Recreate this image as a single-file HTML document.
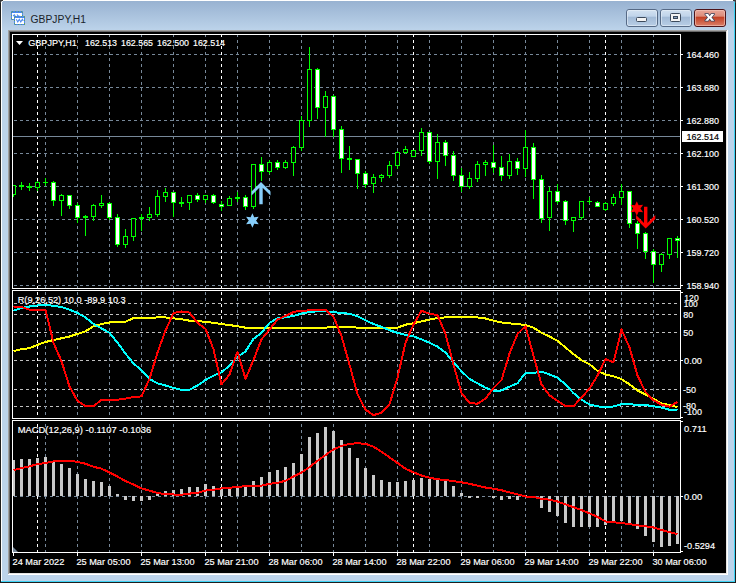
<!DOCTYPE html><html><head><meta charset="utf-8"><title>GBPJPY,H1</title><style>html,body{margin:0;padding:0;background:#fff;overflow:hidden}svg text{white-space:pre}</style></head><body><svg width="738" height="583" viewBox="0 0 738 583" style="display:block" font-family="'Liberation Sans', sans-serif">
<defs><linearGradient id="tb" x1="0" y1="0" x2="0" y2="1"><stop offset="0" stop-color="#98b2d1"/><stop offset="1" stop-color="#bcd3ea"/></linearGradient><linearGradient id="btn" x1="0" y1="0" x2="0" y2="1"><stop offset="0" stop-color="#d4e2f1"/><stop offset="0.4" stop-color="#c0d4ea"/><stop offset="0.44" stop-color="#a2bad6"/><stop offset="1" stop-color="#b9cfe7"/></linearGradient><linearGradient id="cls" x1="0" y1="0" x2="0" y2="1"><stop offset="0" stop-color="#eaa89b"/><stop offset="0.4" stop-color="#dc8c7a"/><stop offset="0.44" stop-color="#c23e22"/><stop offset="1" stop-color="#dc826c"/></linearGradient></defs>
<rect x="0" y="0" width="738" height="583" fill="#ffffff"/>
<rect x="0" y="0" width="736" height="583" fill="#1e1e1e"/>
<rect x="1" y="0" width="734" height="582" fill="#3dd3f5"/>
<rect x="1" y="0" width="733" height="581" fill="#ffffff"/>
<rect x="2" y="1" width="732" height="580" fill="#bcd3ea"/>
<rect x="2" y="1" width="732" height="29" fill="url(#tb)"/>
<rect x="0" y="0" width="3" height="1" fill="#3a3a3a"/>
<rect x="0" y="1" width="1" height="2" fill="#3a3a3a"/>
<rect x="1" y="1" width="1" height="1" fill="#9aa0a8"/>
<rect x="2" y="1" width="1" height="1" fill="#e8eef6"/>
<rect x="733" y="0" width="3" height="1" fill="#3a3a3a"/>
<rect x="735" y="1" width="1" height="2" fill="#3a3a3a"/>
<rect x="734" y="1" width="1" height="1" fill="#6a8aa0"/>
<g shape-rendering="crispEdges">
<rect x="11" y="11" width="12" height="9" fill="#4a88f0"/>
<rect x="12" y="13" width="10" height="6" fill="#ffffff"/>
<path d="M11.5 12V20M22.5 12V20M12 11.5H23M12 19.5H23" stroke="#5f9c6c" stroke-dasharray="1 2" stroke-width="1"/>
<rect x="14" y="16" width="11" height="9" fill="#4a88f0"/>
<rect x="15" y="18" width="9" height="6" fill="#ffffff"/>
<path d="M14.5 17V25M24.5 17V25M15 16.5H25M15 24.5H25" stroke="#5f9c6c" stroke-dasharray="1 2" stroke-width="1"/>
</g>
<path d="M13 16.2l1.3-1.3 1 1M17 14.5l1 1.2 1.5 0.6" stroke="#4a88f0" fill="none" stroke-width="1.1"/>
<path d="M16.3 19.3l1.5 2.6 1.5-2.6 1.5 2.6 1.5-2.6 1 1.6" stroke="#4a88f0" fill="none" stroke-width="1.1"/>
<text x="30.6" y="22.5" font-size="11.7" fill="#1a1f2a" textLength="55.4" lengthAdjust="spacingAndGlyphs">GBPJPY,H1</text>
<rect x="626.5" y="9.5" width="31" height="17" rx="2.5" fill="url(#btn)" stroke="#566a86"/>
<rect x="627.5" y="10.5" width="29" height="15" rx="1.5" fill="none" stroke="#e8f0f8" stroke-opacity="0.6"/>
<rect x="660.5" y="9.5" width="31" height="17" rx="2.5" fill="url(#btn)" stroke="#566a86"/>
<rect x="661.5" y="10.5" width="29" height="15" rx="1.5" fill="none" stroke="#e8f0f8" stroke-opacity="0.6"/>
<rect x="694.5" y="9.5" width="31" height="17" rx="2.5" fill="url(#cls)" stroke="#4d141a"/>
<rect x="695.5" y="10.5" width="29" height="15" rx="1.5" fill="none" stroke="#f5c8bd" stroke-opacity="0.6"/>
<rect x="636.5" y="17.5" width="10" height="4" rx="1" fill="#f4f4f4" stroke="#3c4a5c"/>
<rect x="670.5" y="13.5" width="10" height="8" rx="1" fill="#f4f4f4" stroke="#3c4a5c"/>
<rect x="673.5" y="16.5" width="4" height="2" fill="#8aa2c0" stroke="#3c4a5c"/>
<path d="M705.1 14H708.1L709.7 16.2L711.3 14H714.3L711.4 17.4L714.3 20.8H711.3L709.7 18.6L708.1 20.8H705.1L708 17.4Z" fill="#ffffff" stroke="#3a4560" stroke-width="1.4" stroke-linejoin="round" paint-order="stroke"/>
<rect x="8" y="30" width="720" height="545" fill="#ffffff"/>
<rect x="8" y="30" width="719" height="1" fill="#a0a0a0"/>
<rect x="8" y="30" width="1" height="544" fill="#a0a0a0"/>
<rect x="9" y="31" width="717" height="1" fill="#696969"/>
<rect x="9" y="31" width="1" height="542" fill="#696969"/>
<rect x="9" y="573" width="718" height="1" fill="#e3e3e3"/>
<rect x="726" y="31" width="1" height="543" fill="#e3e3e3"/>
<rect x="10" y="32" width="716" height="541" fill="#000000"/>
<g shape-rendering="crispEdges">
<path d="M14 54.5H17M20 54.5H23M26 54.5H29M32 54.5H35M38 54.5H41M44 54.5H47M50 54.5H53M56 54.5H59M62 54.5H65M68 54.5H71M74 54.5H77M80 54.5H83M86 54.5H89M92 54.5H95M98 54.5H101M104 54.5H107M110 54.5H113M116 54.5H119M122 54.5H125M128 54.5H131M134 54.5H137M140 54.5H143M146 54.5H149M152 54.5H155M158 54.5H161M164 54.5H167M170 54.5H173M176 54.5H179M182 54.5H185M188 54.5H191M194 54.5H197M200 54.5H203M206 54.5H209M212 54.5H215M218 54.5H221M224 54.5H227M230 54.5H233M236 54.5H239M242 54.5H245M248 54.5H251M254 54.5H257M260 54.5H263M266 54.5H269M272 54.5H275M278 54.5H281M284 54.5H287M290 54.5H293M296 54.5H299M302 54.5H305M308 54.5H311M314 54.5H317M320 54.5H323M326 54.5H329M332 54.5H335M338 54.5H341M344 54.5H347M350 54.5H353M356 54.5H359M362 54.5H365M368 54.5H371M374 54.5H377M380 54.5H383M386 54.5H389M392 54.5H395M398 54.5H401M404 54.5H407M410 54.5H413M416 54.5H419M422 54.5H425M428 54.5H431M434 54.5H437M440 54.5H443M446 54.5H449M452 54.5H455M458 54.5H461M464 54.5H467M470 54.5H473M476 54.5H479M482 54.5H485M488 54.5H491M494 54.5H497M500 54.5H503M506 54.5H509M512 54.5H515M518 54.5H521M524 54.5H527M530 54.5H533M536 54.5H539M542 54.5H545M548 54.5H551M554 54.5H557M560 54.5H563M566 54.5H569M572 54.5H575M578 54.5H581M584 54.5H587M590 54.5H593M596 54.5H599M602 54.5H605M608 54.5H611M614 54.5H617M620 54.5H623M626 54.5H629M632 54.5H635M638 54.5H641M644 54.5H647M650 54.5H653M656 54.5H659M662 54.5H665M668 54.5H671M674 54.5H677" stroke="#778899" stroke-width="1"/>
<path d="M14 87.5H17M20 87.5H23M26 87.5H29M32 87.5H35M38 87.5H41M44 87.5H47M50 87.5H53M56 87.5H59M62 87.5H65M68 87.5H71M74 87.5H77M80 87.5H83M86 87.5H89M92 87.5H95M98 87.5H101M104 87.5H107M110 87.5H113M116 87.5H119M122 87.5H125M128 87.5H131M134 87.5H137M140 87.5H143M146 87.5H149M152 87.5H155M158 87.5H161M164 87.5H167M170 87.5H173M176 87.5H179M182 87.5H185M188 87.5H191M194 87.5H197M200 87.5H203M206 87.5H209M212 87.5H215M218 87.5H221M224 87.5H227M230 87.5H233M236 87.5H239M242 87.5H245M248 87.5H251M254 87.5H257M260 87.5H263M266 87.5H269M272 87.5H275M278 87.5H281M284 87.5H287M290 87.5H293M296 87.5H299M302 87.5H305M308 87.5H311M314 87.5H317M320 87.5H323M326 87.5H329M332 87.5H335M338 87.5H341M344 87.5H347M350 87.5H353M356 87.5H359M362 87.5H365M368 87.5H371M374 87.5H377M380 87.5H383M386 87.5H389M392 87.5H395M398 87.5H401M404 87.5H407M410 87.5H413M416 87.5H419M422 87.5H425M428 87.5H431M434 87.5H437M440 87.5H443M446 87.5H449M452 87.5H455M458 87.5H461M464 87.5H467M470 87.5H473M476 87.5H479M482 87.5H485M488 87.5H491M494 87.5H497M500 87.5H503M506 87.5H509M512 87.5H515M518 87.5H521M524 87.5H527M530 87.5H533M536 87.5H539M542 87.5H545M548 87.5H551M554 87.5H557M560 87.5H563M566 87.5H569M572 87.5H575M578 87.5H581M584 87.5H587M590 87.5H593M596 87.5H599M602 87.5H605M608 87.5H611M614 87.5H617M620 87.5H623M626 87.5H629M632 87.5H635M638 87.5H641M644 87.5H647M650 87.5H653M656 87.5H659M662 87.5H665M668 87.5H671M674 87.5H677" stroke="#778899" stroke-width="1"/>
<path d="M14 120.5H17M20 120.5H23M26 120.5H29M32 120.5H35M38 120.5H41M44 120.5H47M50 120.5H53M56 120.5H59M62 120.5H65M68 120.5H71M74 120.5H77M80 120.5H83M86 120.5H89M92 120.5H95M98 120.5H101M104 120.5H107M110 120.5H113M116 120.5H119M122 120.5H125M128 120.5H131M134 120.5H137M140 120.5H143M146 120.5H149M152 120.5H155M158 120.5H161M164 120.5H167M170 120.5H173M176 120.5H179M182 120.5H185M188 120.5H191M194 120.5H197M200 120.5H203M206 120.5H209M212 120.5H215M218 120.5H221M224 120.5H227M230 120.5H233M236 120.5H239M242 120.5H245M248 120.5H251M254 120.5H257M260 120.5H263M266 120.5H269M272 120.5H275M278 120.5H281M284 120.5H287M290 120.5H293M296 120.5H299M302 120.5H305M308 120.5H311M314 120.5H317M320 120.5H323M326 120.5H329M332 120.5H335M338 120.5H341M344 120.5H347M350 120.5H353M356 120.5H359M362 120.5H365M368 120.5H371M374 120.5H377M380 120.5H383M386 120.5H389M392 120.5H395M398 120.5H401M404 120.5H407M410 120.5H413M416 120.5H419M422 120.5H425M428 120.5H431M434 120.5H437M440 120.5H443M446 120.5H449M452 120.5H455M458 120.5H461M464 120.5H467M470 120.5H473M476 120.5H479M482 120.5H485M488 120.5H491M494 120.5H497M500 120.5H503M506 120.5H509M512 120.5H515M518 120.5H521M524 120.5H527M530 120.5H533M536 120.5H539M542 120.5H545M548 120.5H551M554 120.5H557M560 120.5H563M566 120.5H569M572 120.5H575M578 120.5H581M584 120.5H587M590 120.5H593M596 120.5H599M602 120.5H605M608 120.5H611M614 120.5H617M620 120.5H623M626 120.5H629M632 120.5H635M638 120.5H641M644 120.5H647M650 120.5H653M656 120.5H659M662 120.5H665M668 120.5H671M674 120.5H677" stroke="#778899" stroke-width="1"/>
<path d="M14 153.5H17M20 153.5H23M26 153.5H29M32 153.5H35M38 153.5H41M44 153.5H47M50 153.5H53M56 153.5H59M62 153.5H65M68 153.5H71M74 153.5H77M80 153.5H83M86 153.5H89M92 153.5H95M98 153.5H101M104 153.5H107M110 153.5H113M116 153.5H119M122 153.5H125M128 153.5H131M134 153.5H137M140 153.5H143M146 153.5H149M152 153.5H155M158 153.5H161M164 153.5H167M170 153.5H173M176 153.5H179M182 153.5H185M188 153.5H191M194 153.5H197M200 153.5H203M206 153.5H209M212 153.5H215M218 153.5H221M224 153.5H227M230 153.5H233M236 153.5H239M242 153.5H245M248 153.5H251M254 153.5H257M260 153.5H263M266 153.5H269M272 153.5H275M278 153.5H281M284 153.5H287M290 153.5H293M296 153.5H299M302 153.5H305M308 153.5H311M314 153.5H317M320 153.5H323M326 153.5H329M332 153.5H335M338 153.5H341M344 153.5H347M350 153.5H353M356 153.5H359M362 153.5H365M368 153.5H371M374 153.5H377M380 153.5H383M386 153.5H389M392 153.5H395M398 153.5H401M404 153.5H407M410 153.5H413M416 153.5H419M422 153.5H425M428 153.5H431M434 153.5H437M440 153.5H443M446 153.5H449M452 153.5H455M458 153.5H461M464 153.5H467M470 153.5H473M476 153.5H479M482 153.5H485M488 153.5H491M494 153.5H497M500 153.5H503M506 153.5H509M512 153.5H515M518 153.5H521M524 153.5H527M530 153.5H533M536 153.5H539M542 153.5H545M548 153.5H551M554 153.5H557M560 153.5H563M566 153.5H569M572 153.5H575M578 153.5H581M584 153.5H587M590 153.5H593M596 153.5H599M602 153.5H605M608 153.5H611M614 153.5H617M620 153.5H623M626 153.5H629M632 153.5H635M638 153.5H641M644 153.5H647M650 153.5H653M656 153.5H659M662 153.5H665M668 153.5H671M674 153.5H677" stroke="#778899" stroke-width="1"/>
<path d="M14 186.5H17M20 186.5H23M26 186.5H29M32 186.5H35M38 186.5H41M44 186.5H47M50 186.5H53M56 186.5H59M62 186.5H65M68 186.5H71M74 186.5H77M80 186.5H83M86 186.5H89M92 186.5H95M98 186.5H101M104 186.5H107M110 186.5H113M116 186.5H119M122 186.5H125M128 186.5H131M134 186.5H137M140 186.5H143M146 186.5H149M152 186.5H155M158 186.5H161M164 186.5H167M170 186.5H173M176 186.5H179M182 186.5H185M188 186.5H191M194 186.5H197M200 186.5H203M206 186.5H209M212 186.5H215M218 186.5H221M224 186.5H227M230 186.5H233M236 186.5H239M242 186.5H245M248 186.5H251M254 186.5H257M260 186.5H263M266 186.5H269M272 186.5H275M278 186.5H281M284 186.5H287M290 186.5H293M296 186.5H299M302 186.5H305M308 186.5H311M314 186.5H317M320 186.5H323M326 186.5H329M332 186.5H335M338 186.5H341M344 186.5H347M350 186.5H353M356 186.5H359M362 186.5H365M368 186.5H371M374 186.5H377M380 186.5H383M386 186.5H389M392 186.5H395M398 186.5H401M404 186.5H407M410 186.5H413M416 186.5H419M422 186.5H425M428 186.5H431M434 186.5H437M440 186.5H443M446 186.5H449M452 186.5H455M458 186.5H461M464 186.5H467M470 186.5H473M476 186.5H479M482 186.5H485M488 186.5H491M494 186.5H497M500 186.5H503M506 186.5H509M512 186.5H515M518 186.5H521M524 186.5H527M530 186.5H533M536 186.5H539M542 186.5H545M548 186.5H551M554 186.5H557M560 186.5H563M566 186.5H569M572 186.5H575M578 186.5H581M584 186.5H587M590 186.5H593M596 186.5H599M602 186.5H605M608 186.5H611M614 186.5H617M620 186.5H623M626 186.5H629M632 186.5H635M638 186.5H641M644 186.5H647M650 186.5H653M656 186.5H659M662 186.5H665M668 186.5H671M674 186.5H677" stroke="#778899" stroke-width="1"/>
<path d="M14 219.5H17M20 219.5H23M26 219.5H29M32 219.5H35M38 219.5H41M44 219.5H47M50 219.5H53M56 219.5H59M62 219.5H65M68 219.5H71M74 219.5H77M80 219.5H83M86 219.5H89M92 219.5H95M98 219.5H101M104 219.5H107M110 219.5H113M116 219.5H119M122 219.5H125M128 219.5H131M134 219.5H137M140 219.5H143M146 219.5H149M152 219.5H155M158 219.5H161M164 219.5H167M170 219.5H173M176 219.5H179M182 219.5H185M188 219.5H191M194 219.5H197M200 219.5H203M206 219.5H209M212 219.5H215M218 219.5H221M224 219.5H227M230 219.5H233M236 219.5H239M242 219.5H245M248 219.5H251M254 219.5H257M260 219.5H263M266 219.5H269M272 219.5H275M278 219.5H281M284 219.5H287M290 219.5H293M296 219.5H299M302 219.5H305M308 219.5H311M314 219.5H317M320 219.5H323M326 219.5H329M332 219.5H335M338 219.5H341M344 219.5H347M350 219.5H353M356 219.5H359M362 219.5H365M368 219.5H371M374 219.5H377M380 219.5H383M386 219.5H389M392 219.5H395M398 219.5H401M404 219.5H407M410 219.5H413M416 219.5H419M422 219.5H425M428 219.5H431M434 219.5H437M440 219.5H443M446 219.5H449M452 219.5H455M458 219.5H461M464 219.5H467M470 219.5H473M476 219.5H479M482 219.5H485M488 219.5H491M494 219.5H497M500 219.5H503M506 219.5H509M512 219.5H515M518 219.5H521M524 219.5H527M530 219.5H533M536 219.5H539M542 219.5H545M548 219.5H551M554 219.5H557M560 219.5H563M566 219.5H569M572 219.5H575M578 219.5H581M584 219.5H587M590 219.5H593M596 219.5H599M602 219.5H605M608 219.5H611M614 219.5H617M620 219.5H623M626 219.5H629M632 219.5H635M638 219.5H641M644 219.5H647M650 219.5H653M656 219.5H659M662 219.5H665M668 219.5H671M674 219.5H677" stroke="#778899" stroke-width="1"/>
<path d="M14 252.5H17M20 252.5H23M26 252.5H29M32 252.5H35M38 252.5H41M44 252.5H47M50 252.5H53M56 252.5H59M62 252.5H65M68 252.5H71M74 252.5H77M80 252.5H83M86 252.5H89M92 252.5H95M98 252.5H101M104 252.5H107M110 252.5H113M116 252.5H119M122 252.5H125M128 252.5H131M134 252.5H137M140 252.5H143M146 252.5H149M152 252.5H155M158 252.5H161M164 252.5H167M170 252.5H173M176 252.5H179M182 252.5H185M188 252.5H191M194 252.5H197M200 252.5H203M206 252.5H209M212 252.5H215M218 252.5H221M224 252.5H227M230 252.5H233M236 252.5H239M242 252.5H245M248 252.5H251M254 252.5H257M260 252.5H263M266 252.5H269M272 252.5H275M278 252.5H281M284 252.5H287M290 252.5H293M296 252.5H299M302 252.5H305M308 252.5H311M314 252.5H317M320 252.5H323M326 252.5H329M332 252.5H335M338 252.5H341M344 252.5H347M350 252.5H353M356 252.5H359M362 252.5H365M368 252.5H371M374 252.5H377M380 252.5H383M386 252.5H389M392 252.5H395M398 252.5H401M404 252.5H407M410 252.5H413M416 252.5H419M422 252.5H425M428 252.5H431M434 252.5H437M440 252.5H443M446 252.5H449M452 252.5H455M458 252.5H461M464 252.5H467M470 252.5H473M476 252.5H479M482 252.5H485M488 252.5H491M494 252.5H497M500 252.5H503M506 252.5H509M512 252.5H515M518 252.5H521M524 252.5H527M530 252.5H533M536 252.5H539M542 252.5H545M548 252.5H551M554 252.5H557M560 252.5H563M566 252.5H569M572 252.5H575M578 252.5H581M584 252.5H587M590 252.5H593M596 252.5H599M602 252.5H605M608 252.5H611M614 252.5H617M620 252.5H623M626 252.5H629M632 252.5H635M638 252.5H641M644 252.5H647M650 252.5H653M656 252.5H659M662 252.5H665M668 252.5H671M674 252.5H677" stroke="#778899" stroke-width="1"/>
<path d="M14 285.5H17M20 285.5H23M26 285.5H29M32 285.5H35M38 285.5H41M44 285.5H47M50 285.5H53M56 285.5H59M62 285.5H65M68 285.5H71M74 285.5H77M80 285.5H83M86 285.5H89M92 285.5H95M98 285.5H101M104 285.5H107M110 285.5H113M116 285.5H119M122 285.5H125M128 285.5H131M134 285.5H137M140 285.5H143M146 285.5H149M152 285.5H155M158 285.5H161M164 285.5H167M170 285.5H173M176 285.5H179M182 285.5H185M188 285.5H191M194 285.5H197M200 285.5H203M206 285.5H209M212 285.5H215M218 285.5H221M224 285.5H227M230 285.5H233M236 285.5H239M242 285.5H245M248 285.5H251M254 285.5H257M260 285.5H263M266 285.5H269M272 285.5H275M278 285.5H281M284 285.5H287M290 285.5H293M296 285.5H299M302 285.5H305M308 285.5H311M314 285.5H317M320 285.5H323M326 285.5H329M332 285.5H335M338 285.5H341M344 285.5H347M350 285.5H353M356 285.5H359M362 285.5H365M368 285.5H371M374 285.5H377M380 285.5H383M386 285.5H389M392 285.5H395M398 285.5H401M404 285.5H407M410 285.5H413M416 285.5H419M422 285.5H425M428 285.5H431M434 285.5H437M440 285.5H443M446 285.5H449M452 285.5H455M458 285.5H461M464 285.5H467M470 285.5H473M476 285.5H479M482 285.5H485M488 285.5H491M494 285.5H497M500 285.5H503M506 285.5H509M512 285.5H515M518 285.5H521M524 285.5H527M530 285.5H533M536 285.5H539M542 285.5H545M548 285.5H551M554 285.5H557M560 285.5H563M566 285.5H569M572 285.5H575M578 285.5H581M584 285.5H587M590 285.5H593M596 285.5H599M602 285.5H605M608 285.5H611M614 285.5H617M620 285.5H623M626 285.5H629M632 285.5H635M638 285.5H641M644 285.5H647M650 285.5H653M656 285.5H659M662 285.5H665M668 285.5H671M674 285.5H677" stroke="#778899" stroke-width="1"/>
<path d="M14 303.5H17M20 303.5H23M26 303.5H29M32 303.5H35M38 303.5H41M44 303.5H47M50 303.5H53M56 303.5H59M62 303.5H65M68 303.5H71M74 303.5H77M80 303.5H83M86 303.5H89M92 303.5H95M98 303.5H101M104 303.5H107M110 303.5H113M116 303.5H119M122 303.5H125M128 303.5H131M134 303.5H137M140 303.5H143M146 303.5H149M152 303.5H155M158 303.5H161M164 303.5H167M170 303.5H173M176 303.5H179M182 303.5H185M188 303.5H191M194 303.5H197M200 303.5H203M206 303.5H209M212 303.5H215M218 303.5H221M224 303.5H227M230 303.5H233M236 303.5H239M242 303.5H245M248 303.5H251M254 303.5H257M260 303.5H263M266 303.5H269M272 303.5H275M278 303.5H281M284 303.5H287M290 303.5H293M296 303.5H299M302 303.5H305M308 303.5H311M314 303.5H317M320 303.5H323M326 303.5H329M332 303.5H335M338 303.5H341M344 303.5H347M350 303.5H353M356 303.5H359M362 303.5H365M368 303.5H371M374 303.5H377M380 303.5H383M386 303.5H389M392 303.5H395M398 303.5H401M404 303.5H407M410 303.5H413M416 303.5H419M422 303.5H425M428 303.5H431M434 303.5H437M440 303.5H443M446 303.5H449M452 303.5H455M458 303.5H461M464 303.5H467M470 303.5H473M476 303.5H479M482 303.5H485M488 303.5H491M494 303.5H497M500 303.5H503M506 303.5H509M512 303.5H515M518 303.5H521M524 303.5H527M530 303.5H533M536 303.5H539M542 303.5H545M548 303.5H551M554 303.5H557M560 303.5H563M566 303.5H569M572 303.5H575M578 303.5H581M584 303.5H587M590 303.5H593M596 303.5H599M602 303.5H605M608 303.5H611M614 303.5H617M620 303.5H623M626 303.5H629M632 303.5H635M638 303.5H641M644 303.5H647M650 303.5H653M656 303.5H659M662 303.5H665M668 303.5H671M674 303.5H677" stroke="#c0c0c0" stroke-width="1"/>
<path d="M14 314.5H17M20 314.5H23M26 314.5H29M32 314.5H35M38 314.5H41M44 314.5H47M50 314.5H53M56 314.5H59M62 314.5H65M68 314.5H71M74 314.5H77M80 314.5H83M86 314.5H89M92 314.5H95M98 314.5H101M104 314.5H107M110 314.5H113M116 314.5H119M122 314.5H125M128 314.5H131M134 314.5H137M140 314.5H143M146 314.5H149M152 314.5H155M158 314.5H161M164 314.5H167M170 314.5H173M176 314.5H179M182 314.5H185M188 314.5H191M194 314.5H197M200 314.5H203M206 314.5H209M212 314.5H215M218 314.5H221M224 314.5H227M230 314.5H233M236 314.5H239M242 314.5H245M248 314.5H251M254 314.5H257M260 314.5H263M266 314.5H269M272 314.5H275M278 314.5H281M284 314.5H287M290 314.5H293M296 314.5H299M302 314.5H305M308 314.5H311M314 314.5H317M320 314.5H323M326 314.5H329M332 314.5H335M338 314.5H341M344 314.5H347M350 314.5H353M356 314.5H359M362 314.5H365M368 314.5H371M374 314.5H377M380 314.5H383M386 314.5H389M392 314.5H395M398 314.5H401M404 314.5H407M410 314.5H413M416 314.5H419M422 314.5H425M428 314.5H431M434 314.5H437M440 314.5H443M446 314.5H449M452 314.5H455M458 314.5H461M464 314.5H467M470 314.5H473M476 314.5H479M482 314.5H485M488 314.5H491M494 314.5H497M500 314.5H503M506 314.5H509M512 314.5H515M518 314.5H521M524 314.5H527M530 314.5H533M536 314.5H539M542 314.5H545M548 314.5H551M554 314.5H557M560 314.5H563M566 314.5H569M572 314.5H575M578 314.5H581M584 314.5H587M590 314.5H593M596 314.5H599M602 314.5H605M608 314.5H611M614 314.5H617M620 314.5H623M626 314.5H629M632 314.5H635M638 314.5H641M644 314.5H647M650 314.5H653M656 314.5H659M662 314.5H665M668 314.5H671M674 314.5H677" stroke="#c0c0c0" stroke-width="1"/>
<path d="M14 332.5H17M20 332.5H23M26 332.5H29M32 332.5H35M38 332.5H41M44 332.5H47M50 332.5H53M56 332.5H59M62 332.5H65M68 332.5H71M74 332.5H77M80 332.5H83M86 332.5H89M92 332.5H95M98 332.5H101M104 332.5H107M110 332.5H113M116 332.5H119M122 332.5H125M128 332.5H131M134 332.5H137M140 332.5H143M146 332.5H149M152 332.5H155M158 332.5H161M164 332.5H167M170 332.5H173M176 332.5H179M182 332.5H185M188 332.5H191M194 332.5H197M200 332.5H203M206 332.5H209M212 332.5H215M218 332.5H221M224 332.5H227M230 332.5H233M236 332.5H239M242 332.5H245M248 332.5H251M254 332.5H257M260 332.5H263M266 332.5H269M272 332.5H275M278 332.5H281M284 332.5H287M290 332.5H293M296 332.5H299M302 332.5H305M308 332.5H311M314 332.5H317M320 332.5H323M326 332.5H329M332 332.5H335M338 332.5H341M344 332.5H347M350 332.5H353M356 332.5H359M362 332.5H365M368 332.5H371M374 332.5H377M380 332.5H383M386 332.5H389M392 332.5H395M398 332.5H401M404 332.5H407M410 332.5H413M416 332.5H419M422 332.5H425M428 332.5H431M434 332.5H437M440 332.5H443M446 332.5H449M452 332.5H455M458 332.5H461M464 332.5H467M470 332.5H473M476 332.5H479M482 332.5H485M488 332.5H491M494 332.5H497M500 332.5H503M506 332.5H509M512 332.5H515M518 332.5H521M524 332.5H527M530 332.5H533M536 332.5H539M542 332.5H545M548 332.5H551M554 332.5H557M560 332.5H563M566 332.5H569M572 332.5H575M578 332.5H581M584 332.5H587M590 332.5H593M596 332.5H599M602 332.5H605M608 332.5H611M614 332.5H617M620 332.5H623M626 332.5H629M632 332.5H635M638 332.5H641M644 332.5H647M650 332.5H653M656 332.5H659M662 332.5H665M668 332.5H671M674 332.5H677" stroke="#c0c0c0" stroke-width="1"/>
<path d="M14 360.5H17M20 360.5H23M26 360.5H29M32 360.5H35M38 360.5H41M44 360.5H47M50 360.5H53M56 360.5H59M62 360.5H65M68 360.5H71M74 360.5H77M80 360.5H83M86 360.5H89M92 360.5H95M98 360.5H101M104 360.5H107M110 360.5H113M116 360.5H119M122 360.5H125M128 360.5H131M134 360.5H137M140 360.5H143M146 360.5H149M152 360.5H155M158 360.5H161M164 360.5H167M170 360.5H173M176 360.5H179M182 360.5H185M188 360.5H191M194 360.5H197M200 360.5H203M206 360.5H209M212 360.5H215M218 360.5H221M224 360.5H227M230 360.5H233M236 360.5H239M242 360.5H245M248 360.5H251M254 360.5H257M260 360.5H263M266 360.5H269M272 360.5H275M278 360.5H281M284 360.5H287M290 360.5H293M296 360.5H299M302 360.5H305M308 360.5H311M314 360.5H317M320 360.5H323M326 360.5H329M332 360.5H335M338 360.5H341M344 360.5H347M350 360.5H353M356 360.5H359M362 360.5H365M368 360.5H371M374 360.5H377M380 360.5H383M386 360.5H389M392 360.5H395M398 360.5H401M404 360.5H407M410 360.5H413M416 360.5H419M422 360.5H425M428 360.5H431M434 360.5H437M440 360.5H443M446 360.5H449M452 360.5H455M458 360.5H461M464 360.5H467M470 360.5H473M476 360.5H479M482 360.5H485M488 360.5H491M494 360.5H497M500 360.5H503M506 360.5H509M512 360.5H515M518 360.5H521M524 360.5H527M530 360.5H533M536 360.5H539M542 360.5H545M548 360.5H551M554 360.5H557M560 360.5H563M566 360.5H569M572 360.5H575M578 360.5H581M584 360.5H587M590 360.5H593M596 360.5H599M602 360.5H605M608 360.5H611M614 360.5H617M620 360.5H623M626 360.5H629M632 360.5H635M638 360.5H641M644 360.5H647M650 360.5H653M656 360.5H659M662 360.5H665M668 360.5H671M674 360.5H677" stroke="#c0c0c0" stroke-width="1"/>
<path d="M14 389.5H17M20 389.5H23M26 389.5H29M32 389.5H35M38 389.5H41M44 389.5H47M50 389.5H53M56 389.5H59M62 389.5H65M68 389.5H71M74 389.5H77M80 389.5H83M86 389.5H89M92 389.5H95M98 389.5H101M104 389.5H107M110 389.5H113M116 389.5H119M122 389.5H125M128 389.5H131M134 389.5H137M140 389.5H143M146 389.5H149M152 389.5H155M158 389.5H161M164 389.5H167M170 389.5H173M176 389.5H179M182 389.5H185M188 389.5H191M194 389.5H197M200 389.5H203M206 389.5H209M212 389.5H215M218 389.5H221M224 389.5H227M230 389.5H233M236 389.5H239M242 389.5H245M248 389.5H251M254 389.5H257M260 389.5H263M266 389.5H269M272 389.5H275M278 389.5H281M284 389.5H287M290 389.5H293M296 389.5H299M302 389.5H305M308 389.5H311M314 389.5H317M320 389.5H323M326 389.5H329M332 389.5H335M338 389.5H341M344 389.5H347M350 389.5H353M356 389.5H359M362 389.5H365M368 389.5H371M374 389.5H377M380 389.5H383M386 389.5H389M392 389.5H395M398 389.5H401M404 389.5H407M410 389.5H413M416 389.5H419M422 389.5H425M428 389.5H431M434 389.5H437M440 389.5H443M446 389.5H449M452 389.5H455M458 389.5H461M464 389.5H467M470 389.5H473M476 389.5H479M482 389.5H485M488 389.5H491M494 389.5H497M500 389.5H503M506 389.5H509M512 389.5H515M518 389.5H521M524 389.5H527M530 389.5H533M536 389.5H539M542 389.5H545M548 389.5H551M554 389.5H557M560 389.5H563M566 389.5H569M572 389.5H575M578 389.5H581M584 389.5H587M590 389.5H593M596 389.5H599M602 389.5H605M608 389.5H611M614 389.5H617M620 389.5H623M626 389.5H629M632 389.5H635M638 389.5H641M644 389.5H647M650 389.5H653M656 389.5H659M662 389.5H665M668 389.5H671M674 389.5H677" stroke="#c0c0c0" stroke-width="1"/>
<path d="M14 406.5H17M20 406.5H23M26 406.5H29M32 406.5H35M38 406.5H41M44 406.5H47M50 406.5H53M56 406.5H59M62 406.5H65M68 406.5H71M74 406.5H77M80 406.5H83M86 406.5H89M92 406.5H95M98 406.5H101M104 406.5H107M110 406.5H113M116 406.5H119M122 406.5H125M128 406.5H131M134 406.5H137M140 406.5H143M146 406.5H149M152 406.5H155M158 406.5H161M164 406.5H167M170 406.5H173M176 406.5H179M182 406.5H185M188 406.5H191M194 406.5H197M200 406.5H203M206 406.5H209M212 406.5H215M218 406.5H221M224 406.5H227M230 406.5H233M236 406.5H239M242 406.5H245M248 406.5H251M254 406.5H257M260 406.5H263M266 406.5H269M272 406.5H275M278 406.5H281M284 406.5H287M290 406.5H293M296 406.5H299M302 406.5H305M308 406.5H311M314 406.5H317M320 406.5H323M326 406.5H329M332 406.5H335M338 406.5H341M344 406.5H347M350 406.5H353M356 406.5H359M362 406.5H365M368 406.5H371M374 406.5H377M380 406.5H383M386 406.5H389M392 406.5H395M398 406.5H401M404 406.5H407M410 406.5H413M416 406.5H419M422 406.5H425M428 406.5H431M434 406.5H437M440 406.5H443M446 406.5H449M452 406.5H455M458 406.5H461M464 406.5H467M470 406.5H473M476 406.5H479M482 406.5H485M488 406.5H491M494 406.5H497M500 406.5H503M506 406.5H509M512 406.5H515M518 406.5H521M524 406.5H527M530 406.5H533M536 406.5H539M542 406.5H545M548 406.5H551M554 406.5H557M560 406.5H563M566 406.5H569M572 406.5H575M578 406.5H581M584 406.5H587M590 406.5H593M596 406.5H599M602 406.5H605M608 406.5H611M614 406.5H617M620 406.5H623M626 406.5H629M632 406.5H635M638 406.5H641M644 406.5H647M650 406.5H653M656 406.5H659M662 406.5H665M668 406.5H671M674 406.5H677" stroke="#c0c0c0" stroke-width="1"/>
<path d="M14 496.5H17M20 496.5H23M26 496.5H29M32 496.5H35M38 496.5H41M44 496.5H47M50 496.5H53M56 496.5H59M62 496.5H65M68 496.5H71M74 496.5H77M80 496.5H83M86 496.5H89M92 496.5H95M98 496.5H101M104 496.5H107M110 496.5H113M116 496.5H119M122 496.5H125M128 496.5H131M134 496.5H137M140 496.5H143M146 496.5H149M152 496.5H155M158 496.5H161M164 496.5H167M170 496.5H173M176 496.5H179M182 496.5H185M188 496.5H191M194 496.5H197M200 496.5H203M206 496.5H209M212 496.5H215M218 496.5H221M224 496.5H227M230 496.5H233M236 496.5H239M242 496.5H245M248 496.5H251M254 496.5H257M260 496.5H263M266 496.5H269M272 496.5H275M278 496.5H281M284 496.5H287M290 496.5H293M296 496.5H299M302 496.5H305M308 496.5H311M314 496.5H317M320 496.5H323M326 496.5H329M332 496.5H335M338 496.5H341M344 496.5H347M350 496.5H353M356 496.5H359M362 496.5H365M368 496.5H371M374 496.5H377M380 496.5H383M386 496.5H389M392 496.5H395M398 496.5H401M404 496.5H407M410 496.5H413M416 496.5H419M422 496.5H425M428 496.5H431M434 496.5H437M440 496.5H443M446 496.5H449M452 496.5H455M458 496.5H461M464 496.5H467M470 496.5H473M476 496.5H479M482 496.5H485M488 496.5H491M494 496.5H497M500 496.5H503M506 496.5H509M512 496.5H515M518 496.5H521M524 496.5H527M530 496.5H533M536 496.5H539M542 496.5H545M548 496.5H551M554 496.5H557M560 496.5H563M566 496.5H569M572 496.5H575M578 496.5H581M584 496.5H587M590 496.5H593M596 496.5H599M602 496.5H605M608 496.5H611M614 496.5H617M620 496.5H623M626 496.5H629M632 496.5H635M638 496.5H641M644 496.5H647M650 496.5H653M656 496.5H659M662 496.5H665M668 496.5H671M674 496.5H677" stroke="#778899" stroke-width="1"/>
<path d="M45.5 35V37M45.5 40V43M45.5 46V49M45.5 52V55M45.5 58V61M45.5 64V67M45.5 70V73M45.5 76V79M45.5 82V85M45.5 88V91M45.5 94V97M45.5 100V103M45.5 106V109M45.5 112V115M45.5 118V121M45.5 124V127M45.5 130V133M45.5 136V139M45.5 142V145M45.5 148V151M45.5 154V157M45.5 160V163M45.5 166V169M45.5 172V175M45.5 178V181M45.5 184V187M45.5 190V193M45.5 196V199M45.5 202V205M45.5 208V211M45.5 214V217M45.5 220V223M45.5 226V229M45.5 232V235M45.5 238V241M45.5 244V247M45.5 250V253M45.5 256V259M45.5 262V265M45.5 268V271M45.5 274V277M45.5 280V283M45.5 286V288" stroke="#778899" stroke-width="1"/>
<path d="M77.5 35V37M77.5 40V43M77.5 46V49M77.5 52V55M77.5 58V61M77.5 64V67M77.5 70V73M77.5 76V79M77.5 82V85M77.5 88V91M77.5 94V97M77.5 100V103M77.5 106V109M77.5 112V115M77.5 118V121M77.5 124V127M77.5 130V133M77.5 136V139M77.5 142V145M77.5 148V151M77.5 154V157M77.5 160V163M77.5 166V169M77.5 172V175M77.5 178V181M77.5 184V187M77.5 190V193M77.5 196V199M77.5 202V205M77.5 208V211M77.5 214V217M77.5 220V223M77.5 226V229M77.5 232V235M77.5 238V241M77.5 244V247M77.5 250V253M77.5 256V259M77.5 262V265M77.5 268V271M77.5 274V277M77.5 280V283M77.5 286V288" stroke="#778899" stroke-width="1"/>
<path d="M109.5 35V37M109.5 40V43M109.5 46V49M109.5 52V55M109.5 58V61M109.5 64V67M109.5 70V73M109.5 76V79M109.5 82V85M109.5 88V91M109.5 94V97M109.5 100V103M109.5 106V109M109.5 112V115M109.5 118V121M109.5 124V127M109.5 130V133M109.5 136V139M109.5 142V145M109.5 148V151M109.5 154V157M109.5 160V163M109.5 166V169M109.5 172V175M109.5 178V181M109.5 184V187M109.5 190V193M109.5 196V199M109.5 202V205M109.5 208V211M109.5 214V217M109.5 220V223M109.5 226V229M109.5 232V235M109.5 238V241M109.5 244V247M109.5 250V253M109.5 256V259M109.5 262V265M109.5 268V271M109.5 274V277M109.5 280V283M109.5 286V288" stroke="#778899" stroke-width="1"/>
<path d="M141.5 35V37M141.5 40V43M141.5 46V49M141.5 52V55M141.5 58V61M141.5 64V67M141.5 70V73M141.5 76V79M141.5 82V85M141.5 88V91M141.5 94V97M141.5 100V103M141.5 106V109M141.5 112V115M141.5 118V121M141.5 124V127M141.5 130V133M141.5 136V139M141.5 142V145M141.5 148V151M141.5 154V157M141.5 160V163M141.5 166V169M141.5 172V175M141.5 178V181M141.5 184V187M141.5 190V193M141.5 196V199M141.5 202V205M141.5 208V211M141.5 214V217M141.5 220V223M141.5 226V229M141.5 232V235M141.5 238V241M141.5 244V247M141.5 250V253M141.5 256V259M141.5 262V265M141.5 268V271M141.5 274V277M141.5 280V283M141.5 286V288" stroke="#778899" stroke-width="1"/>
<path d="M173.5 35V37M173.5 40V43M173.5 46V49M173.5 52V55M173.5 58V61M173.5 64V67M173.5 70V73M173.5 76V79M173.5 82V85M173.5 88V91M173.5 94V97M173.5 100V103M173.5 106V109M173.5 112V115M173.5 118V121M173.5 124V127M173.5 130V133M173.5 136V139M173.5 142V145M173.5 148V151M173.5 154V157M173.5 160V163M173.5 166V169M173.5 172V175M173.5 178V181M173.5 184V187M173.5 190V193M173.5 196V199M173.5 202V205M173.5 208V211M173.5 214V217M173.5 220V223M173.5 226V229M173.5 232V235M173.5 238V241M173.5 244V247M173.5 250V253M173.5 256V259M173.5 262V265M173.5 268V271M173.5 274V277M173.5 280V283M173.5 286V288" stroke="#778899" stroke-width="1"/>
<path d="M205.5 35V37M205.5 40V43M205.5 46V49M205.5 52V55M205.5 58V61M205.5 64V67M205.5 70V73M205.5 76V79M205.5 82V85M205.5 88V91M205.5 94V97M205.5 100V103M205.5 106V109M205.5 112V115M205.5 118V121M205.5 124V127M205.5 130V133M205.5 136V139M205.5 142V145M205.5 148V151M205.5 154V157M205.5 160V163M205.5 166V169M205.5 172V175M205.5 178V181M205.5 184V187M205.5 190V193M205.5 196V199M205.5 202V205M205.5 208V211M205.5 214V217M205.5 220V223M205.5 226V229M205.5 232V235M205.5 238V241M205.5 244V247M205.5 250V253M205.5 256V259M205.5 262V265M205.5 268V271M205.5 274V277M205.5 280V283M205.5 286V288" stroke="#778899" stroke-width="1"/>
<path d="M237.5 35V37M237.5 40V43M237.5 46V49M237.5 52V55M237.5 58V61M237.5 64V67M237.5 70V73M237.5 76V79M237.5 82V85M237.5 88V91M237.5 94V97M237.5 100V103M237.5 106V109M237.5 112V115M237.5 118V121M237.5 124V127M237.5 130V133M237.5 136V139M237.5 142V145M237.5 148V151M237.5 154V157M237.5 160V163M237.5 166V169M237.5 172V175M237.5 178V181M237.5 184V187M237.5 190V193M237.5 196V199M237.5 202V205M237.5 208V211M237.5 214V217M237.5 220V223M237.5 226V229M237.5 232V235M237.5 238V241M237.5 244V247M237.5 250V253M237.5 256V259M237.5 262V265M237.5 268V271M237.5 274V277M237.5 280V283M237.5 286V288" stroke="#778899" stroke-width="1"/>
<path d="M269.5 35V37M269.5 40V43M269.5 46V49M269.5 52V55M269.5 58V61M269.5 64V67M269.5 70V73M269.5 76V79M269.5 82V85M269.5 88V91M269.5 94V97M269.5 100V103M269.5 106V109M269.5 112V115M269.5 118V121M269.5 124V127M269.5 130V133M269.5 136V139M269.5 142V145M269.5 148V151M269.5 154V157M269.5 160V163M269.5 166V169M269.5 172V175M269.5 178V181M269.5 184V187M269.5 190V193M269.5 196V199M269.5 202V205M269.5 208V211M269.5 214V217M269.5 220V223M269.5 226V229M269.5 232V235M269.5 238V241M269.5 244V247M269.5 250V253M269.5 256V259M269.5 262V265M269.5 268V271M269.5 274V277M269.5 280V283M269.5 286V288" stroke="#778899" stroke-width="1"/>
<path d="M301.5 35V37M301.5 40V43M301.5 46V49M301.5 52V55M301.5 58V61M301.5 64V67M301.5 70V73M301.5 76V79M301.5 82V85M301.5 88V91M301.5 94V97M301.5 100V103M301.5 106V109M301.5 112V115M301.5 118V121M301.5 124V127M301.5 130V133M301.5 136V139M301.5 142V145M301.5 148V151M301.5 154V157M301.5 160V163M301.5 166V169M301.5 172V175M301.5 178V181M301.5 184V187M301.5 190V193M301.5 196V199M301.5 202V205M301.5 208V211M301.5 214V217M301.5 220V223M301.5 226V229M301.5 232V235M301.5 238V241M301.5 244V247M301.5 250V253M301.5 256V259M301.5 262V265M301.5 268V271M301.5 274V277M301.5 280V283M301.5 286V288" stroke="#778899" stroke-width="1"/>
<path d="M333.5 35V37M333.5 40V43M333.5 46V49M333.5 52V55M333.5 58V61M333.5 64V67M333.5 70V73M333.5 76V79M333.5 82V85M333.5 88V91M333.5 94V97M333.5 100V103M333.5 106V109M333.5 112V115M333.5 118V121M333.5 124V127M333.5 130V133M333.5 136V139M333.5 142V145M333.5 148V151M333.5 154V157M333.5 160V163M333.5 166V169M333.5 172V175M333.5 178V181M333.5 184V187M333.5 190V193M333.5 196V199M333.5 202V205M333.5 208V211M333.5 214V217M333.5 220V223M333.5 226V229M333.5 232V235M333.5 238V241M333.5 244V247M333.5 250V253M333.5 256V259M333.5 262V265M333.5 268V271M333.5 274V277M333.5 280V283M333.5 286V288" stroke="#778899" stroke-width="1"/>
<path d="M365.5 35V37M365.5 40V43M365.5 46V49M365.5 52V55M365.5 58V61M365.5 64V67M365.5 70V73M365.5 76V79M365.5 82V85M365.5 88V91M365.5 94V97M365.5 100V103M365.5 106V109M365.5 112V115M365.5 118V121M365.5 124V127M365.5 130V133M365.5 136V139M365.5 142V145M365.5 148V151M365.5 154V157M365.5 160V163M365.5 166V169M365.5 172V175M365.5 178V181M365.5 184V187M365.5 190V193M365.5 196V199M365.5 202V205M365.5 208V211M365.5 214V217M365.5 220V223M365.5 226V229M365.5 232V235M365.5 238V241M365.5 244V247M365.5 250V253M365.5 256V259M365.5 262V265M365.5 268V271M365.5 274V277M365.5 280V283M365.5 286V288" stroke="#778899" stroke-width="1"/>
<path d="M397.5 35V37M397.5 40V43M397.5 46V49M397.5 52V55M397.5 58V61M397.5 64V67M397.5 70V73M397.5 76V79M397.5 82V85M397.5 88V91M397.5 94V97M397.5 100V103M397.5 106V109M397.5 112V115M397.5 118V121M397.5 124V127M397.5 130V133M397.5 136V139M397.5 142V145M397.5 148V151M397.5 154V157M397.5 160V163M397.5 166V169M397.5 172V175M397.5 178V181M397.5 184V187M397.5 190V193M397.5 196V199M397.5 202V205M397.5 208V211M397.5 214V217M397.5 220V223M397.5 226V229M397.5 232V235M397.5 238V241M397.5 244V247M397.5 250V253M397.5 256V259M397.5 262V265M397.5 268V271M397.5 274V277M397.5 280V283M397.5 286V288" stroke="#778899" stroke-width="1"/>
<path d="M429.5 35V37M429.5 40V43M429.5 46V49M429.5 52V55M429.5 58V61M429.5 64V67M429.5 70V73M429.5 76V79M429.5 82V85M429.5 88V91M429.5 94V97M429.5 100V103M429.5 106V109M429.5 112V115M429.5 118V121M429.5 124V127M429.5 130V133M429.5 136V139M429.5 142V145M429.5 148V151M429.5 154V157M429.5 160V163M429.5 166V169M429.5 172V175M429.5 178V181M429.5 184V187M429.5 190V193M429.5 196V199M429.5 202V205M429.5 208V211M429.5 214V217M429.5 220V223M429.5 226V229M429.5 232V235M429.5 238V241M429.5 244V247M429.5 250V253M429.5 256V259M429.5 262V265M429.5 268V271M429.5 274V277M429.5 280V283M429.5 286V288" stroke="#778899" stroke-width="1"/>
<path d="M461.5 35V37M461.5 40V43M461.5 46V49M461.5 52V55M461.5 58V61M461.5 64V67M461.5 70V73M461.5 76V79M461.5 82V85M461.5 88V91M461.5 94V97M461.5 100V103M461.5 106V109M461.5 112V115M461.5 118V121M461.5 124V127M461.5 130V133M461.5 136V139M461.5 142V145M461.5 148V151M461.5 154V157M461.5 160V163M461.5 166V169M461.5 172V175M461.5 178V181M461.5 184V187M461.5 190V193M461.5 196V199M461.5 202V205M461.5 208V211M461.5 214V217M461.5 220V223M461.5 226V229M461.5 232V235M461.5 238V241M461.5 244V247M461.5 250V253M461.5 256V259M461.5 262V265M461.5 268V271M461.5 274V277M461.5 280V283M461.5 286V288" stroke="#778899" stroke-width="1"/>
<path d="M493.5 35V37M493.5 40V43M493.5 46V49M493.5 52V55M493.5 58V61M493.5 64V67M493.5 70V73M493.5 76V79M493.5 82V85M493.5 88V91M493.5 94V97M493.5 100V103M493.5 106V109M493.5 112V115M493.5 118V121M493.5 124V127M493.5 130V133M493.5 136V139M493.5 142V145M493.5 148V151M493.5 154V157M493.5 160V163M493.5 166V169M493.5 172V175M493.5 178V181M493.5 184V187M493.5 190V193M493.5 196V199M493.5 202V205M493.5 208V211M493.5 214V217M493.5 220V223M493.5 226V229M493.5 232V235M493.5 238V241M493.5 244V247M493.5 250V253M493.5 256V259M493.5 262V265M493.5 268V271M493.5 274V277M493.5 280V283M493.5 286V288" stroke="#778899" stroke-width="1"/>
<path d="M525.5 35V37M525.5 40V43M525.5 46V49M525.5 52V55M525.5 58V61M525.5 64V67M525.5 70V73M525.5 76V79M525.5 82V85M525.5 88V91M525.5 94V97M525.5 100V103M525.5 106V109M525.5 112V115M525.5 118V121M525.5 124V127M525.5 130V133M525.5 136V139M525.5 142V145M525.5 148V151M525.5 154V157M525.5 160V163M525.5 166V169M525.5 172V175M525.5 178V181M525.5 184V187M525.5 190V193M525.5 196V199M525.5 202V205M525.5 208V211M525.5 214V217M525.5 220V223M525.5 226V229M525.5 232V235M525.5 238V241M525.5 244V247M525.5 250V253M525.5 256V259M525.5 262V265M525.5 268V271M525.5 274V277M525.5 280V283M525.5 286V288" stroke="#778899" stroke-width="1"/>
<path d="M557.5 35V37M557.5 40V43M557.5 46V49M557.5 52V55M557.5 58V61M557.5 64V67M557.5 70V73M557.5 76V79M557.5 82V85M557.5 88V91M557.5 94V97M557.5 100V103M557.5 106V109M557.5 112V115M557.5 118V121M557.5 124V127M557.5 130V133M557.5 136V139M557.5 142V145M557.5 148V151M557.5 154V157M557.5 160V163M557.5 166V169M557.5 172V175M557.5 178V181M557.5 184V187M557.5 190V193M557.5 196V199M557.5 202V205M557.5 208V211M557.5 214V217M557.5 220V223M557.5 226V229M557.5 232V235M557.5 238V241M557.5 244V247M557.5 250V253M557.5 256V259M557.5 262V265M557.5 268V271M557.5 274V277M557.5 280V283M557.5 286V288" stroke="#778899" stroke-width="1"/>
<path d="M589.5 35V37M589.5 40V43M589.5 46V49M589.5 52V55M589.5 58V61M589.5 64V67M589.5 70V73M589.5 76V79M589.5 82V85M589.5 88V91M589.5 94V97M589.5 100V103M589.5 106V109M589.5 112V115M589.5 118V121M589.5 124V127M589.5 130V133M589.5 136V139M589.5 142V145M589.5 148V151M589.5 154V157M589.5 160V163M589.5 166V169M589.5 172V175M589.5 178V181M589.5 184V187M589.5 190V193M589.5 196V199M589.5 202V205M589.5 208V211M589.5 214V217M589.5 220V223M589.5 226V229M589.5 232V235M589.5 238V241M589.5 244V247M589.5 250V253M589.5 256V259M589.5 262V265M589.5 268V271M589.5 274V277M589.5 280V283M589.5 286V288" stroke="#778899" stroke-width="1"/>
<path d="M621.5 35V37M621.5 40V43M621.5 46V49M621.5 52V55M621.5 58V61M621.5 64V67M621.5 70V73M621.5 76V79M621.5 82V85M621.5 88V91M621.5 94V97M621.5 100V103M621.5 106V109M621.5 112V115M621.5 118V121M621.5 124V127M621.5 130V133M621.5 136V139M621.5 142V145M621.5 148V151M621.5 154V157M621.5 160V163M621.5 166V169M621.5 172V175M621.5 178V181M621.5 184V187M621.5 190V193M621.5 196V199M621.5 202V205M621.5 208V211M621.5 214V217M621.5 220V223M621.5 226V229M621.5 232V235M621.5 238V241M621.5 244V247M621.5 250V253M621.5 256V259M621.5 262V265M621.5 268V271M621.5 274V277M621.5 280V283M621.5 286V288" stroke="#778899" stroke-width="1"/>
<path d="M653.5 35V37M653.5 40V43M653.5 46V49M653.5 52V55M653.5 58V61M653.5 64V67M653.5 70V73M653.5 76V79M653.5 82V85M653.5 88V91M653.5 94V97M653.5 100V103M653.5 106V109M653.5 112V115M653.5 118V121M653.5 124V127M653.5 130V133M653.5 136V139M653.5 142V145M653.5 148V151M653.5 154V157M653.5 160V163M653.5 166V169M653.5 172V175M653.5 178V181M653.5 184V187M653.5 190V193M653.5 196V199M653.5 202V205M653.5 208V211M653.5 214V217M653.5 220V223M653.5 226V229M653.5 232V235M653.5 238V241M653.5 244V247M653.5 250V253M653.5 256V259M653.5 262V265M653.5 268V271M653.5 274V277M653.5 280V283M653.5 286V288" stroke="#778899" stroke-width="1"/>
<path d="M37.5 35V37M37.5 40V43M37.5 46V49M37.5 52V55M37.5 58V61M37.5 64V67M37.5 70V73M37.5 76V79M37.5 82V85M37.5 88V91M37.5 94V97M37.5 100V103M37.5 106V109M37.5 112V115M37.5 118V121M37.5 124V127M37.5 130V133M37.5 136V139M37.5 142V145M37.5 148V151M37.5 154V157M37.5 160V163M37.5 166V169M37.5 172V175M37.5 178V181M37.5 184V187M37.5 190V193M37.5 196V199M37.5 202V205M37.5 208V211M37.5 214V217M37.5 220V223M37.5 226V229M37.5 232V235M37.5 238V241M37.5 244V247M37.5 250V253M37.5 256V259M37.5 262V265M37.5 268V271M37.5 274V277M37.5 280V283M37.5 286V288" stroke="#ffffff" stroke-width="1"/>
<path d="M221.5 35V37M221.5 40V43M221.5 46V49M221.5 52V55M221.5 58V61M221.5 64V67M221.5 70V73M221.5 76V79M221.5 82V85M221.5 88V91M221.5 94V97M221.5 100V103M221.5 106V109M221.5 112V115M221.5 118V121M221.5 124V127M221.5 130V133M221.5 136V139M221.5 142V145M221.5 148V151M221.5 154V157M221.5 160V163M221.5 166V169M221.5 172V175M221.5 178V181M221.5 184V187M221.5 190V193M221.5 196V199M221.5 202V205M221.5 208V211M221.5 214V217M221.5 220V223M221.5 226V229M221.5 232V235M221.5 238V241M221.5 244V247M221.5 250V253M221.5 256V259M221.5 262V265M221.5 268V271M221.5 274V277M221.5 280V283M221.5 286V288" stroke="#ffffff" stroke-width="1"/>
<path d="M413.5 35V37M413.5 40V43M413.5 46V49M413.5 52V55M413.5 58V61M413.5 64V67M413.5 70V73M413.5 76V79M413.5 82V85M413.5 88V91M413.5 94V97M413.5 100V103M413.5 106V109M413.5 112V115M413.5 118V121M413.5 124V127M413.5 130V133M413.5 136V139M413.5 142V145M413.5 148V151M413.5 154V157M413.5 160V163M413.5 166V169M413.5 172V175M413.5 178V181M413.5 184V187M413.5 190V193M413.5 196V199M413.5 202V205M413.5 208V211M413.5 214V217M413.5 220V223M413.5 226V229M413.5 232V235M413.5 238V241M413.5 244V247M413.5 250V253M413.5 256V259M413.5 262V265M413.5 268V271M413.5 274V277M413.5 280V283M413.5 286V288" stroke="#ffffff" stroke-width="1"/>
<path d="M605.5 35V37M605.5 40V43M605.5 46V49M605.5 52V55M605.5 58V61M605.5 64V67M605.5 70V73M605.5 76V79M605.5 82V85M605.5 88V91M605.5 94V97M605.5 100V103M605.5 106V109M605.5 112V115M605.5 118V121M605.5 124V127M605.5 130V133M605.5 136V139M605.5 142V145M605.5 148V151M605.5 154V157M605.5 160V163M605.5 166V169M605.5 172V175M605.5 178V181M605.5 184V187M605.5 190V193M605.5 196V199M605.5 202V205M605.5 208V211M605.5 214V217M605.5 220V223M605.5 226V229M605.5 232V235M605.5 238V241M605.5 244V247M605.5 250V253M605.5 256V259M605.5 262V265M605.5 268V271M605.5 274V277M605.5 280V283M605.5 286V288" stroke="#ffffff" stroke-width="1"/>
<path d="M45.5 292V295M45.5 298V301M45.5 304V307M45.5 310V313M45.5 316V319M45.5 322V325M45.5 328V331M45.5 334V337M45.5 340V343M45.5 346V349M45.5 352V355M45.5 358V361M45.5 364V367M45.5 370V373M45.5 376V379M45.5 382V385M45.5 388V391M45.5 394V397M45.5 400V403M45.5 406V409M45.5 412V415" stroke="#778899" stroke-width="1"/>
<path d="M77.5 292V295M77.5 298V301M77.5 304V307M77.5 310V313M77.5 316V319M77.5 322V325M77.5 328V331M77.5 334V337M77.5 340V343M77.5 346V349M77.5 352V355M77.5 358V361M77.5 364V367M77.5 370V373M77.5 376V379M77.5 382V385M77.5 388V391M77.5 394V397M77.5 400V403M77.5 406V409M77.5 412V415" stroke="#778899" stroke-width="1"/>
<path d="M109.5 292V295M109.5 298V301M109.5 304V307M109.5 310V313M109.5 316V319M109.5 322V325M109.5 328V331M109.5 334V337M109.5 340V343M109.5 346V349M109.5 352V355M109.5 358V361M109.5 364V367M109.5 370V373M109.5 376V379M109.5 382V385M109.5 388V391M109.5 394V397M109.5 400V403M109.5 406V409M109.5 412V415" stroke="#778899" stroke-width="1"/>
<path d="M141.5 292V295M141.5 298V301M141.5 304V307M141.5 310V313M141.5 316V319M141.5 322V325M141.5 328V331M141.5 334V337M141.5 340V343M141.5 346V349M141.5 352V355M141.5 358V361M141.5 364V367M141.5 370V373M141.5 376V379M141.5 382V385M141.5 388V391M141.5 394V397M141.5 400V403M141.5 406V409M141.5 412V415" stroke="#778899" stroke-width="1"/>
<path d="M173.5 292V295M173.5 298V301M173.5 304V307M173.5 310V313M173.5 316V319M173.5 322V325M173.5 328V331M173.5 334V337M173.5 340V343M173.5 346V349M173.5 352V355M173.5 358V361M173.5 364V367M173.5 370V373M173.5 376V379M173.5 382V385M173.5 388V391M173.5 394V397M173.5 400V403M173.5 406V409M173.5 412V415" stroke="#778899" stroke-width="1"/>
<path d="M205.5 292V295M205.5 298V301M205.5 304V307M205.5 310V313M205.5 316V319M205.5 322V325M205.5 328V331M205.5 334V337M205.5 340V343M205.5 346V349M205.5 352V355M205.5 358V361M205.5 364V367M205.5 370V373M205.5 376V379M205.5 382V385M205.5 388V391M205.5 394V397M205.5 400V403M205.5 406V409M205.5 412V415" stroke="#778899" stroke-width="1"/>
<path d="M237.5 292V295M237.5 298V301M237.5 304V307M237.5 310V313M237.5 316V319M237.5 322V325M237.5 328V331M237.5 334V337M237.5 340V343M237.5 346V349M237.5 352V355M237.5 358V361M237.5 364V367M237.5 370V373M237.5 376V379M237.5 382V385M237.5 388V391M237.5 394V397M237.5 400V403M237.5 406V409M237.5 412V415" stroke="#778899" stroke-width="1"/>
<path d="M269.5 292V295M269.5 298V301M269.5 304V307M269.5 310V313M269.5 316V319M269.5 322V325M269.5 328V331M269.5 334V337M269.5 340V343M269.5 346V349M269.5 352V355M269.5 358V361M269.5 364V367M269.5 370V373M269.5 376V379M269.5 382V385M269.5 388V391M269.5 394V397M269.5 400V403M269.5 406V409M269.5 412V415" stroke="#778899" stroke-width="1"/>
<path d="M301.5 292V295M301.5 298V301M301.5 304V307M301.5 310V313M301.5 316V319M301.5 322V325M301.5 328V331M301.5 334V337M301.5 340V343M301.5 346V349M301.5 352V355M301.5 358V361M301.5 364V367M301.5 370V373M301.5 376V379M301.5 382V385M301.5 388V391M301.5 394V397M301.5 400V403M301.5 406V409M301.5 412V415" stroke="#778899" stroke-width="1"/>
<path d="M333.5 292V295M333.5 298V301M333.5 304V307M333.5 310V313M333.5 316V319M333.5 322V325M333.5 328V331M333.5 334V337M333.5 340V343M333.5 346V349M333.5 352V355M333.5 358V361M333.5 364V367M333.5 370V373M333.5 376V379M333.5 382V385M333.5 388V391M333.5 394V397M333.5 400V403M333.5 406V409M333.5 412V415" stroke="#778899" stroke-width="1"/>
<path d="M365.5 292V295M365.5 298V301M365.5 304V307M365.5 310V313M365.5 316V319M365.5 322V325M365.5 328V331M365.5 334V337M365.5 340V343M365.5 346V349M365.5 352V355M365.5 358V361M365.5 364V367M365.5 370V373M365.5 376V379M365.5 382V385M365.5 388V391M365.5 394V397M365.5 400V403M365.5 406V409M365.5 412V415" stroke="#778899" stroke-width="1"/>
<path d="M397.5 292V295M397.5 298V301M397.5 304V307M397.5 310V313M397.5 316V319M397.5 322V325M397.5 328V331M397.5 334V337M397.5 340V343M397.5 346V349M397.5 352V355M397.5 358V361M397.5 364V367M397.5 370V373M397.5 376V379M397.5 382V385M397.5 388V391M397.5 394V397M397.5 400V403M397.5 406V409M397.5 412V415" stroke="#778899" stroke-width="1"/>
<path d="M429.5 292V295M429.5 298V301M429.5 304V307M429.5 310V313M429.5 316V319M429.5 322V325M429.5 328V331M429.5 334V337M429.5 340V343M429.5 346V349M429.5 352V355M429.5 358V361M429.5 364V367M429.5 370V373M429.5 376V379M429.5 382V385M429.5 388V391M429.5 394V397M429.5 400V403M429.5 406V409M429.5 412V415" stroke="#778899" stroke-width="1"/>
<path d="M461.5 292V295M461.5 298V301M461.5 304V307M461.5 310V313M461.5 316V319M461.5 322V325M461.5 328V331M461.5 334V337M461.5 340V343M461.5 346V349M461.5 352V355M461.5 358V361M461.5 364V367M461.5 370V373M461.5 376V379M461.5 382V385M461.5 388V391M461.5 394V397M461.5 400V403M461.5 406V409M461.5 412V415" stroke="#778899" stroke-width="1"/>
<path d="M493.5 292V295M493.5 298V301M493.5 304V307M493.5 310V313M493.5 316V319M493.5 322V325M493.5 328V331M493.5 334V337M493.5 340V343M493.5 346V349M493.5 352V355M493.5 358V361M493.5 364V367M493.5 370V373M493.5 376V379M493.5 382V385M493.5 388V391M493.5 394V397M493.5 400V403M493.5 406V409M493.5 412V415" stroke="#778899" stroke-width="1"/>
<path d="M525.5 292V295M525.5 298V301M525.5 304V307M525.5 310V313M525.5 316V319M525.5 322V325M525.5 328V331M525.5 334V337M525.5 340V343M525.5 346V349M525.5 352V355M525.5 358V361M525.5 364V367M525.5 370V373M525.5 376V379M525.5 382V385M525.5 388V391M525.5 394V397M525.5 400V403M525.5 406V409M525.5 412V415" stroke="#778899" stroke-width="1"/>
<path d="M557.5 292V295M557.5 298V301M557.5 304V307M557.5 310V313M557.5 316V319M557.5 322V325M557.5 328V331M557.5 334V337M557.5 340V343M557.5 346V349M557.5 352V355M557.5 358V361M557.5 364V367M557.5 370V373M557.5 376V379M557.5 382V385M557.5 388V391M557.5 394V397M557.5 400V403M557.5 406V409M557.5 412V415" stroke="#778899" stroke-width="1"/>
<path d="M589.5 292V295M589.5 298V301M589.5 304V307M589.5 310V313M589.5 316V319M589.5 322V325M589.5 328V331M589.5 334V337M589.5 340V343M589.5 346V349M589.5 352V355M589.5 358V361M589.5 364V367M589.5 370V373M589.5 376V379M589.5 382V385M589.5 388V391M589.5 394V397M589.5 400V403M589.5 406V409M589.5 412V415" stroke="#778899" stroke-width="1"/>
<path d="M621.5 292V295M621.5 298V301M621.5 304V307M621.5 310V313M621.5 316V319M621.5 322V325M621.5 328V331M621.5 334V337M621.5 340V343M621.5 346V349M621.5 352V355M621.5 358V361M621.5 364V367M621.5 370V373M621.5 376V379M621.5 382V385M621.5 388V391M621.5 394V397M621.5 400V403M621.5 406V409M621.5 412V415" stroke="#778899" stroke-width="1"/>
<path d="M653.5 292V295M653.5 298V301M653.5 304V307M653.5 310V313M653.5 316V319M653.5 322V325M653.5 328V331M653.5 334V337M653.5 340V343M653.5 346V349M653.5 352V355M653.5 358V361M653.5 364V367M653.5 370V373M653.5 376V379M653.5 382V385M653.5 388V391M653.5 394V397M653.5 400V403M653.5 406V409M653.5 412V415" stroke="#778899" stroke-width="1"/>
<path d="M37.5 292V295M37.5 298V301M37.5 304V307M37.5 310V313M37.5 316V319M37.5 322V325M37.5 328V331M37.5 334V337M37.5 340V343M37.5 346V349M37.5 352V355M37.5 358V361M37.5 364V367M37.5 370V373M37.5 376V379M37.5 382V385M37.5 388V391M37.5 394V397M37.5 400V403M37.5 406V409M37.5 412V415" stroke="#ffffff" stroke-width="1"/>
<path d="M221.5 292V295M221.5 298V301M221.5 304V307M221.5 310V313M221.5 316V319M221.5 322V325M221.5 328V331M221.5 334V337M221.5 340V343M221.5 346V349M221.5 352V355M221.5 358V361M221.5 364V367M221.5 370V373M221.5 376V379M221.5 382V385M221.5 388V391M221.5 394V397M221.5 400V403M221.5 406V409M221.5 412V415" stroke="#ffffff" stroke-width="1"/>
<path d="M413.5 292V295M413.5 298V301M413.5 304V307M413.5 310V313M413.5 316V319M413.5 322V325M413.5 328V331M413.5 334V337M413.5 340V343M413.5 346V349M413.5 352V355M413.5 358V361M413.5 364V367M413.5 370V373M413.5 376V379M413.5 382V385M413.5 388V391M413.5 394V397M413.5 400V403M413.5 406V409M413.5 412V415" stroke="#ffffff" stroke-width="1"/>
<path d="M605.5 292V295M605.5 298V301M605.5 304V307M605.5 310V313M605.5 316V319M605.5 322V325M605.5 328V331M605.5 334V337M605.5 340V343M605.5 346V349M605.5 352V355M605.5 358V361M605.5 364V367M605.5 370V373M605.5 376V379M605.5 382V385M605.5 388V391M605.5 394V397M605.5 400V403M605.5 406V409M605.5 412V415" stroke="#ffffff" stroke-width="1"/>
<path d="M45.5 424V427M45.5 430V433M45.5 436V439M45.5 442V445M45.5 448V451M45.5 454V457M45.5 460V463M45.5 466V469M45.5 472V475M45.5 478V481M45.5 484V487M45.5 490V493M45.5 496V499M45.5 502V505M45.5 508V511M45.5 514V517M45.5 520V523M45.5 526V529M45.5 532V535M45.5 538V541M45.5 544V547M45.5 550V552" stroke="#778899" stroke-width="1"/>
<path d="M77.5 424V427M77.5 430V433M77.5 436V439M77.5 442V445M77.5 448V451M77.5 454V457M77.5 460V463M77.5 466V469M77.5 472V475M77.5 478V481M77.5 484V487M77.5 490V493M77.5 496V499M77.5 502V505M77.5 508V511M77.5 514V517M77.5 520V523M77.5 526V529M77.5 532V535M77.5 538V541M77.5 544V547M77.5 550V552" stroke="#778899" stroke-width="1"/>
<path d="M109.5 424V427M109.5 430V433M109.5 436V439M109.5 442V445M109.5 448V451M109.5 454V457M109.5 460V463M109.5 466V469M109.5 472V475M109.5 478V481M109.5 484V487M109.5 490V493M109.5 496V499M109.5 502V505M109.5 508V511M109.5 514V517M109.5 520V523M109.5 526V529M109.5 532V535M109.5 538V541M109.5 544V547M109.5 550V552" stroke="#778899" stroke-width="1"/>
<path d="M141.5 424V427M141.5 430V433M141.5 436V439M141.5 442V445M141.5 448V451M141.5 454V457M141.5 460V463M141.5 466V469M141.5 472V475M141.5 478V481M141.5 484V487M141.5 490V493M141.5 496V499M141.5 502V505M141.5 508V511M141.5 514V517M141.5 520V523M141.5 526V529M141.5 532V535M141.5 538V541M141.5 544V547M141.5 550V552" stroke="#778899" stroke-width="1"/>
<path d="M173.5 424V427M173.5 430V433M173.5 436V439M173.5 442V445M173.5 448V451M173.5 454V457M173.5 460V463M173.5 466V469M173.5 472V475M173.5 478V481M173.5 484V487M173.5 490V493M173.5 496V499M173.5 502V505M173.5 508V511M173.5 514V517M173.5 520V523M173.5 526V529M173.5 532V535M173.5 538V541M173.5 544V547M173.5 550V552" stroke="#778899" stroke-width="1"/>
<path d="M205.5 424V427M205.5 430V433M205.5 436V439M205.5 442V445M205.5 448V451M205.5 454V457M205.5 460V463M205.5 466V469M205.5 472V475M205.5 478V481M205.5 484V487M205.5 490V493M205.5 496V499M205.5 502V505M205.5 508V511M205.5 514V517M205.5 520V523M205.5 526V529M205.5 532V535M205.5 538V541M205.5 544V547M205.5 550V552" stroke="#778899" stroke-width="1"/>
<path d="M237.5 424V427M237.5 430V433M237.5 436V439M237.5 442V445M237.5 448V451M237.5 454V457M237.5 460V463M237.5 466V469M237.5 472V475M237.5 478V481M237.5 484V487M237.5 490V493M237.5 496V499M237.5 502V505M237.5 508V511M237.5 514V517M237.5 520V523M237.5 526V529M237.5 532V535M237.5 538V541M237.5 544V547M237.5 550V552" stroke="#778899" stroke-width="1"/>
<path d="M269.5 424V427M269.5 430V433M269.5 436V439M269.5 442V445M269.5 448V451M269.5 454V457M269.5 460V463M269.5 466V469M269.5 472V475M269.5 478V481M269.5 484V487M269.5 490V493M269.5 496V499M269.5 502V505M269.5 508V511M269.5 514V517M269.5 520V523M269.5 526V529M269.5 532V535M269.5 538V541M269.5 544V547M269.5 550V552" stroke="#778899" stroke-width="1"/>
<path d="M301.5 424V427M301.5 430V433M301.5 436V439M301.5 442V445M301.5 448V451M301.5 454V457M301.5 460V463M301.5 466V469M301.5 472V475M301.5 478V481M301.5 484V487M301.5 490V493M301.5 496V499M301.5 502V505M301.5 508V511M301.5 514V517M301.5 520V523M301.5 526V529M301.5 532V535M301.5 538V541M301.5 544V547M301.5 550V552" stroke="#778899" stroke-width="1"/>
<path d="M333.5 424V427M333.5 430V433M333.5 436V439M333.5 442V445M333.5 448V451M333.5 454V457M333.5 460V463M333.5 466V469M333.5 472V475M333.5 478V481M333.5 484V487M333.5 490V493M333.5 496V499M333.5 502V505M333.5 508V511M333.5 514V517M333.5 520V523M333.5 526V529M333.5 532V535M333.5 538V541M333.5 544V547M333.5 550V552" stroke="#778899" stroke-width="1"/>
<path d="M365.5 424V427M365.5 430V433M365.5 436V439M365.5 442V445M365.5 448V451M365.5 454V457M365.5 460V463M365.5 466V469M365.5 472V475M365.5 478V481M365.5 484V487M365.5 490V493M365.5 496V499M365.5 502V505M365.5 508V511M365.5 514V517M365.5 520V523M365.5 526V529M365.5 532V535M365.5 538V541M365.5 544V547M365.5 550V552" stroke="#778899" stroke-width="1"/>
<path d="M397.5 424V427M397.5 430V433M397.5 436V439M397.5 442V445M397.5 448V451M397.5 454V457M397.5 460V463M397.5 466V469M397.5 472V475M397.5 478V481M397.5 484V487M397.5 490V493M397.5 496V499M397.5 502V505M397.5 508V511M397.5 514V517M397.5 520V523M397.5 526V529M397.5 532V535M397.5 538V541M397.5 544V547M397.5 550V552" stroke="#778899" stroke-width="1"/>
<path d="M429.5 424V427M429.5 430V433M429.5 436V439M429.5 442V445M429.5 448V451M429.5 454V457M429.5 460V463M429.5 466V469M429.5 472V475M429.5 478V481M429.5 484V487M429.5 490V493M429.5 496V499M429.5 502V505M429.5 508V511M429.5 514V517M429.5 520V523M429.5 526V529M429.5 532V535M429.5 538V541M429.5 544V547M429.5 550V552" stroke="#778899" stroke-width="1"/>
<path d="M461.5 424V427M461.5 430V433M461.5 436V439M461.5 442V445M461.5 448V451M461.5 454V457M461.5 460V463M461.5 466V469M461.5 472V475M461.5 478V481M461.5 484V487M461.5 490V493M461.5 496V499M461.5 502V505M461.5 508V511M461.5 514V517M461.5 520V523M461.5 526V529M461.5 532V535M461.5 538V541M461.5 544V547M461.5 550V552" stroke="#778899" stroke-width="1"/>
<path d="M493.5 424V427M493.5 430V433M493.5 436V439M493.5 442V445M493.5 448V451M493.5 454V457M493.5 460V463M493.5 466V469M493.5 472V475M493.5 478V481M493.5 484V487M493.5 490V493M493.5 496V499M493.5 502V505M493.5 508V511M493.5 514V517M493.5 520V523M493.5 526V529M493.5 532V535M493.5 538V541M493.5 544V547M493.5 550V552" stroke="#778899" stroke-width="1"/>
<path d="M525.5 424V427M525.5 430V433M525.5 436V439M525.5 442V445M525.5 448V451M525.5 454V457M525.5 460V463M525.5 466V469M525.5 472V475M525.5 478V481M525.5 484V487M525.5 490V493M525.5 496V499M525.5 502V505M525.5 508V511M525.5 514V517M525.5 520V523M525.5 526V529M525.5 532V535M525.5 538V541M525.5 544V547M525.5 550V552" stroke="#778899" stroke-width="1"/>
<path d="M557.5 424V427M557.5 430V433M557.5 436V439M557.5 442V445M557.5 448V451M557.5 454V457M557.5 460V463M557.5 466V469M557.5 472V475M557.5 478V481M557.5 484V487M557.5 490V493M557.5 496V499M557.5 502V505M557.5 508V511M557.5 514V517M557.5 520V523M557.5 526V529M557.5 532V535M557.5 538V541M557.5 544V547M557.5 550V552" stroke="#778899" stroke-width="1"/>
<path d="M589.5 424V427M589.5 430V433M589.5 436V439M589.5 442V445M589.5 448V451M589.5 454V457M589.5 460V463M589.5 466V469M589.5 472V475M589.5 478V481M589.5 484V487M589.5 490V493M589.5 496V499M589.5 502V505M589.5 508V511M589.5 514V517M589.5 520V523M589.5 526V529M589.5 532V535M589.5 538V541M589.5 544V547M589.5 550V552" stroke="#778899" stroke-width="1"/>
<path d="M621.5 424V427M621.5 430V433M621.5 436V439M621.5 442V445M621.5 448V451M621.5 454V457M621.5 460V463M621.5 466V469M621.5 472V475M621.5 478V481M621.5 484V487M621.5 490V493M621.5 496V499M621.5 502V505M621.5 508V511M621.5 514V517M621.5 520V523M621.5 526V529M621.5 532V535M621.5 538V541M621.5 544V547M621.5 550V552" stroke="#778899" stroke-width="1"/>
<path d="M653.5 424V427M653.5 430V433M653.5 436V439M653.5 442V445M653.5 448V451M653.5 454V457M653.5 460V463M653.5 466V469M653.5 472V475M653.5 478V481M653.5 484V487M653.5 490V493M653.5 496V499M653.5 502V505M653.5 508V511M653.5 514V517M653.5 520V523M653.5 526V529M653.5 532V535M653.5 538V541M653.5 544V547M653.5 550V552" stroke="#778899" stroke-width="1"/>
<path d="M37.5 424V427M37.5 430V433M37.5 436V439M37.5 442V445M37.5 448V451M37.5 454V457M37.5 460V463M37.5 466V469M37.5 472V475M37.5 478V481M37.5 484V487M37.5 490V493M37.5 496V499M37.5 502V505M37.5 508V511M37.5 514V517M37.5 520V523M37.5 526V529M37.5 532V535M37.5 538V541M37.5 544V547M37.5 550V552" stroke="#ffffff" stroke-width="1"/>
<path d="M221.5 424V427M221.5 430V433M221.5 436V439M221.5 442V445M221.5 448V451M221.5 454V457M221.5 460V463M221.5 466V469M221.5 472V475M221.5 478V481M221.5 484V487M221.5 490V493M221.5 496V499M221.5 502V505M221.5 508V511M221.5 514V517M221.5 520V523M221.5 526V529M221.5 532V535M221.5 538V541M221.5 544V547M221.5 550V552" stroke="#ffffff" stroke-width="1"/>
<path d="M413.5 424V427M413.5 430V433M413.5 436V439M413.5 442V445M413.5 448V451M413.5 454V457M413.5 460V463M413.5 466V469M413.5 472V475M413.5 478V481M413.5 484V487M413.5 490V493M413.5 496V499M413.5 502V505M413.5 508V511M413.5 514V517M413.5 520V523M413.5 526V529M413.5 532V535M413.5 538V541M413.5 544V547M413.5 550V552" stroke="#ffffff" stroke-width="1"/>
<path d="M605.5 424V427M605.5 430V433M605.5 436V439M605.5 442V445M605.5 448V451M605.5 454V457M605.5 460V463M605.5 466V469M605.5 472V475M605.5 478V481M605.5 484V487M605.5 490V493M605.5 496V499M605.5 502V505M605.5 508V511M605.5 514V517M605.5 520V523M605.5 526V529M605.5 532V535M605.5 538V541M605.5 544V547M605.5 550V552" stroke="#ffffff" stroke-width="1"/>
<rect x="13" y="136" width="667" height="1" fill="#778899"/>
<rect x="12" y="34" width="669" height="1" fill="#fff"/>
<rect x="12" y="288" width="669" height="1" fill="#fff"/>
<rect x="12" y="34" width="1" height="255" fill="#fff"/>
<rect x="680" y="34" width="1" height="255" fill="#fff"/>
<rect x="12" y="290" width="669" height="1" fill="#fff"/>
<rect x="12" y="418" width="669" height="1" fill="#fff"/>
<rect x="12" y="290" width="1" height="129" fill="#fff"/>
<rect x="680" y="290" width="1" height="129" fill="#fff"/>
<rect x="12" y="420" width="669" height="1" fill="#fff"/>
<rect x="12" y="552" width="669" height="1" fill="#fff"/>
<rect x="12" y="420" width="1" height="133" fill="#fff"/>
<rect x="680" y="420" width="1" height="133" fill="#fff"/>
<rect x="681" y="54" width="2" height="1" fill="#fff"/>
<rect x="681" y="87" width="2" height="1" fill="#fff"/>
<rect x="681" y="120" width="2" height="1" fill="#fff"/>
<rect x="681" y="153" width="2" height="1" fill="#fff"/>
<rect x="681" y="186" width="2" height="1" fill="#fff"/>
<rect x="681" y="219" width="2" height="1" fill="#fff"/>
<rect x="681" y="252" width="2" height="1" fill="#fff"/>
<rect x="681" y="285" width="2" height="1" fill="#fff"/>
<rect x="681" y="292" width="2" height="1" fill="#fff"/>
<rect x="681" y="360" width="2" height="1" fill="#fff"/>
<rect x="681" y="417" width="2" height="1" fill="#fff"/>
<rect x="681" y="421" width="2" height="1" fill="#fff"/>
<rect x="681" y="496" width="2" height="1" fill="#fff"/>
<rect x="681" y="551" width="2" height="1" fill="#fff"/>
<rect x="13" y="553" width="1" height="3" fill="#fff"/>
<rect x="77" y="553" width="1" height="3" fill="#fff"/>
<rect x="141" y="553" width="1" height="3" fill="#fff"/>
<rect x="205" y="553" width="1" height="3" fill="#fff"/>
<rect x="269" y="553" width="1" height="3" fill="#fff"/>
<rect x="333" y="553" width="1" height="3" fill="#fff"/>
<rect x="397" y="553" width="1" height="3" fill="#fff"/>
<rect x="461" y="553" width="1" height="3" fill="#fff"/>
<rect x="525" y="553" width="1" height="3" fill="#fff"/>
<rect x="589" y="553" width="1" height="3" fill="#fff"/>
<rect x="653" y="553" width="1" height="3" fill="#fff"/>
</g>
<clipPath id="cm"><rect x="13" y="35" width="667" height="253"/></clipPath>
<g clip-path="url(#cm)" shape-rendering="crispEdges">
<rect x="13" y="185" width="1" height="12" fill="#00ff00"/>
<rect x="11" y="185" width="5" height="10" fill="#00ff00"/>
<rect x="12" y="186" width="3" height="8" fill="#000000"/>
<rect x="21" y="182" width="1" height="8" fill="#00ff00"/>
<rect x="19" y="185" width="5" height="2" fill="#00ff00"/>
<rect x="29" y="183" width="1" height="8" fill="#00ff00"/>
<rect x="27" y="186" width="5" height="2" fill="#00ff00"/>
<rect x="37" y="181" width="1" height="10" fill="#00ff00"/>
<rect x="35" y="182" width="5" height="6" fill="#00ff00"/>
<rect x="36" y="183" width="3" height="4" fill="#000000"/>
<rect x="45" y="178" width="1" height="8" fill="#00ff00"/>
<rect x="43" y="182" width="5" height="1" fill="#00ff00"/>
<rect x="53" y="181" width="1" height="25" fill="#00ff00"/>
<rect x="51" y="182" width="5" height="19" fill="#00ff00"/>
<rect x="52" y="183" width="3" height="17" fill="#ffffff"/>
<rect x="61" y="194" width="1" height="22" fill="#00ff00"/>
<rect x="59" y="195" width="5" height="6" fill="#00ff00"/>
<rect x="60" y="196" width="3" height="4" fill="#000000"/>
<rect x="69" y="195" width="1" height="14" fill="#00ff00"/>
<rect x="67" y="195" width="5" height="11" fill="#00ff00"/>
<rect x="68" y="196" width="3" height="9" fill="#ffffff"/>
<rect x="77" y="203" width="1" height="20" fill="#00ff00"/>
<rect x="75" y="205" width="5" height="13" fill="#00ff00"/>
<rect x="76" y="206" width="3" height="11" fill="#ffffff"/>
<rect x="85" y="215" width="1" height="21" fill="#00ff00"/>
<rect x="83" y="216" width="5" height="2" fill="#00ff00"/>
<rect x="93" y="204" width="1" height="17" fill="#00ff00"/>
<rect x="91" y="205" width="5" height="12" fill="#00ff00"/>
<rect x="92" y="206" width="3" height="10" fill="#000000"/>
<rect x="101" y="195" width="1" height="13" fill="#00ff00"/>
<rect x="99" y="203" width="5" height="3" fill="#00ff00"/>
<rect x="100" y="204" width="3" height="1" fill="#000000"/>
<rect x="109" y="202" width="1" height="18" fill="#00ff00"/>
<rect x="107" y="203" width="5" height="15" fill="#00ff00"/>
<rect x="108" y="204" width="3" height="13" fill="#ffffff"/>
<rect x="117" y="214" width="1" height="33" fill="#00ff00"/>
<rect x="115" y="217" width="5" height="28" fill="#00ff00"/>
<rect x="116" y="218" width="3" height="26" fill="#ffffff"/>
<rect x="125" y="229" width="1" height="19" fill="#00ff00"/>
<rect x="123" y="236" width="5" height="9" fill="#00ff00"/>
<rect x="124" y="237" width="3" height="7" fill="#000000"/>
<rect x="133" y="218" width="1" height="23" fill="#00ff00"/>
<rect x="131" y="218" width="5" height="19" fill="#00ff00"/>
<rect x="132" y="219" width="3" height="17" fill="#000000"/>
<rect x="141" y="214" width="1" height="17" fill="#00ff00"/>
<rect x="139" y="217" width="5" height="2" fill="#00ff00"/>
<rect x="149" y="207" width="1" height="14" fill="#00ff00"/>
<rect x="147" y="214" width="5" height="4" fill="#00ff00"/>
<rect x="148" y="215" width="3" height="2" fill="#000000"/>
<rect x="157" y="190" width="1" height="27" fill="#00ff00"/>
<rect x="155" y="196" width="5" height="19" fill="#00ff00"/>
<rect x="156" y="197" width="3" height="17" fill="#000000"/>
<rect x="165" y="188" width="1" height="14" fill="#00ff00"/>
<rect x="163" y="192" width="5" height="5" fill="#00ff00"/>
<rect x="164" y="193" width="3" height="3" fill="#000000"/>
<rect x="173" y="192" width="1" height="25" fill="#00ff00"/>
<rect x="171" y="192" width="5" height="11" fill="#00ff00"/>
<rect x="172" y="193" width="3" height="9" fill="#ffffff"/>
<rect x="181" y="197" width="1" height="10" fill="#00ff00"/>
<rect x="179" y="202" width="5" height="2" fill="#00ff00"/>
<rect x="189" y="195" width="1" height="15" fill="#00ff00"/>
<rect x="187" y="195" width="5" height="8" fill="#00ff00"/>
<rect x="188" y="196" width="3" height="6" fill="#000000"/>
<rect x="197" y="193" width="1" height="9" fill="#00ff00"/>
<rect x="195" y="195" width="5" height="5" fill="#00ff00"/>
<rect x="196" y="196" width="3" height="3" fill="#ffffff"/>
<rect x="205" y="195" width="1" height="8" fill="#00ff00"/>
<rect x="203" y="195" width="5" height="5" fill="#00ff00"/>
<rect x="204" y="196" width="3" height="3" fill="#000000"/>
<rect x="213" y="194" width="1" height="10" fill="#00ff00"/>
<rect x="211" y="195" width="5" height="8" fill="#00ff00"/>
<rect x="212" y="196" width="3" height="6" fill="#ffffff"/>
<rect x="221" y="201" width="1" height="10" fill="#00ff00"/>
<rect x="219" y="204" width="5" height="3" fill="#00ff00"/>
<rect x="220" y="205" width="3" height="1" fill="#ffffff"/>
<rect x="229" y="196" width="1" height="10" fill="#00ff00"/>
<rect x="227" y="198" width="5" height="8" fill="#00ff00"/>
<rect x="228" y="199" width="3" height="6" fill="#000000"/>
<rect x="237" y="192" width="1" height="10" fill="#00ff00"/>
<rect x="235" y="197" width="5" height="2" fill="#00ff00"/>
<rect x="245" y="195" width="1" height="15" fill="#00ff00"/>
<rect x="243" y="197" width="5" height="10" fill="#00ff00"/>
<rect x="244" y="198" width="3" height="8" fill="#ffffff"/>
<rect x="253" y="164" width="1" height="45" fill="#00ff00"/>
<rect x="251" y="164" width="5" height="43" fill="#00ff00"/>
<rect x="252" y="165" width="3" height="41" fill="#000000"/>
<rect x="261" y="157" width="1" height="24" fill="#00ff00"/>
<rect x="259" y="164" width="5" height="8" fill="#00ff00"/>
<rect x="260" y="165" width="3" height="6" fill="#ffffff"/>
<rect x="269" y="160" width="1" height="14" fill="#00ff00"/>
<rect x="267" y="162" width="5" height="10" fill="#00ff00"/>
<rect x="268" y="163" width="3" height="8" fill="#000000"/>
<rect x="277" y="160" width="1" height="10" fill="#00ff00"/>
<rect x="275" y="162" width="5" height="6" fill="#00ff00"/>
<rect x="276" y="163" width="3" height="4" fill="#ffffff"/>
<rect x="285" y="160" width="1" height="9" fill="#00ff00"/>
<rect x="283" y="162" width="5" height="6" fill="#00ff00"/>
<rect x="284" y="163" width="3" height="4" fill="#000000"/>
<rect x="293" y="146" width="1" height="30" fill="#00ff00"/>
<rect x="291" y="147" width="5" height="16" fill="#00ff00"/>
<rect x="292" y="148" width="3" height="14" fill="#000000"/>
<rect x="301" y="116" width="1" height="35" fill="#00ff00"/>
<rect x="299" y="120" width="5" height="28" fill="#00ff00"/>
<rect x="300" y="121" width="3" height="26" fill="#000000"/>
<rect x="309" y="47" width="1" height="80" fill="#00ff00"/>
<rect x="307" y="69" width="5" height="52" fill="#00ff00"/>
<rect x="308" y="70" width="3" height="50" fill="#000000"/>
<rect x="317" y="68" width="1" height="51" fill="#00ff00"/>
<rect x="315" y="69" width="5" height="39" fill="#00ff00"/>
<rect x="316" y="70" width="3" height="37" fill="#ffffff"/>
<rect x="325" y="91" width="1" height="46" fill="#00ff00"/>
<rect x="323" y="96" width="5" height="12" fill="#00ff00"/>
<rect x="324" y="97" width="3" height="10" fill="#000000"/>
<rect x="333" y="95" width="1" height="42" fill="#00ff00"/>
<rect x="331" y="96" width="5" height="34" fill="#00ff00"/>
<rect x="332" y="97" width="3" height="32" fill="#ffffff"/>
<rect x="341" y="126" width="1" height="47" fill="#00ff00"/>
<rect x="339" y="129" width="5" height="30" fill="#00ff00"/>
<rect x="340" y="130" width="3" height="28" fill="#ffffff"/>
<rect x="349" y="146" width="1" height="24" fill="#00ff00"/>
<rect x="347" y="158" width="5" height="2" fill="#00ff00"/>
<rect x="357" y="159" width="1" height="30" fill="#00ff00"/>
<rect x="355" y="159" width="5" height="15" fill="#00ff00"/>
<rect x="356" y="160" width="3" height="13" fill="#ffffff"/>
<rect x="365" y="171" width="1" height="17" fill="#00ff00"/>
<rect x="363" y="173" width="5" height="12" fill="#00ff00"/>
<rect x="364" y="174" width="3" height="10" fill="#ffffff"/>
<rect x="373" y="174" width="1" height="19" fill="#00ff00"/>
<rect x="371" y="177" width="5" height="7" fill="#00ff00"/>
<rect x="372" y="178" width="3" height="5" fill="#000000"/>
<rect x="381" y="174" width="1" height="8" fill="#00ff00"/>
<rect x="379" y="175" width="5" height="3" fill="#00ff00"/>
<rect x="380" y="176" width="3" height="1" fill="#000000"/>
<rect x="389" y="161" width="1" height="17" fill="#00ff00"/>
<rect x="387" y="165" width="5" height="11" fill="#00ff00"/>
<rect x="388" y="166" width="3" height="9" fill="#000000"/>
<rect x="397" y="151" width="1" height="18" fill="#00ff00"/>
<rect x="395" y="152" width="5" height="14" fill="#00ff00"/>
<rect x="396" y="153" width="3" height="12" fill="#000000"/>
<rect x="405" y="146" width="1" height="8" fill="#00ff00"/>
<rect x="403" y="149" width="5" height="4" fill="#00ff00"/>
<rect x="404" y="150" width="3" height="2" fill="#000000"/>
<rect x="413" y="150" width="1" height="7" fill="#00ff00"/>
<rect x="411" y="150" width="5" height="7" fill="#00ff00"/>
<rect x="412" y="151" width="3" height="5" fill="#000000"/>
<rect x="421" y="128" width="1" height="28" fill="#00ff00"/>
<rect x="419" y="132" width="5" height="19" fill="#00ff00"/>
<rect x="420" y="133" width="3" height="17" fill="#000000"/>
<rect x="429" y="132" width="1" height="32" fill="#00ff00"/>
<rect x="427" y="132" width="5" height="30" fill="#00ff00"/>
<rect x="428" y="133" width="3" height="28" fill="#ffffff"/>
<rect x="437" y="134" width="1" height="45" fill="#00ff00"/>
<rect x="435" y="142" width="5" height="20" fill="#00ff00"/>
<rect x="436" y="143" width="3" height="18" fill="#000000"/>
<rect x="445" y="140" width="1" height="26" fill="#00ff00"/>
<rect x="443" y="142" width="5" height="14" fill="#00ff00"/>
<rect x="444" y="143" width="3" height="12" fill="#ffffff"/>
<rect x="453" y="151" width="1" height="30" fill="#00ff00"/>
<rect x="451" y="155" width="5" height="21" fill="#00ff00"/>
<rect x="452" y="156" width="3" height="19" fill="#ffffff"/>
<rect x="461" y="168" width="1" height="24" fill="#00ff00"/>
<rect x="459" y="175" width="5" height="12" fill="#00ff00"/>
<rect x="460" y="176" width="3" height="10" fill="#ffffff"/>
<rect x="469" y="172" width="1" height="17" fill="#00ff00"/>
<rect x="467" y="178" width="5" height="9" fill="#00ff00"/>
<rect x="468" y="179" width="3" height="7" fill="#000000"/>
<rect x="477" y="161" width="1" height="21" fill="#00ff00"/>
<rect x="475" y="164" width="5" height="15" fill="#00ff00"/>
<rect x="476" y="165" width="3" height="13" fill="#000000"/>
<rect x="485" y="160" width="1" height="16" fill="#00ff00"/>
<rect x="483" y="162" width="5" height="3" fill="#00ff00"/>
<rect x="484" y="163" width="3" height="1" fill="#000000"/>
<rect x="493" y="145" width="1" height="28" fill="#00ff00"/>
<rect x="491" y="162" width="5" height="6" fill="#00ff00"/>
<rect x="492" y="163" width="3" height="4" fill="#ffffff"/>
<rect x="501" y="156" width="1" height="25" fill="#00ff00"/>
<rect x="499" y="167" width="5" height="9" fill="#00ff00"/>
<rect x="500" y="168" width="3" height="7" fill="#ffffff"/>
<rect x="509" y="154" width="1" height="25" fill="#00ff00"/>
<rect x="507" y="161" width="5" height="15" fill="#00ff00"/>
<rect x="508" y="162" width="3" height="13" fill="#000000"/>
<rect x="517" y="158" width="1" height="17" fill="#00ff00"/>
<rect x="515" y="161" width="5" height="8" fill="#00ff00"/>
<rect x="516" y="162" width="3" height="6" fill="#ffffff"/>
<rect x="525" y="130" width="1" height="47" fill="#00ff00"/>
<rect x="523" y="147" width="5" height="22" fill="#00ff00"/>
<rect x="524" y="148" width="3" height="20" fill="#000000"/>
<rect x="533" y="143" width="1" height="56" fill="#00ff00"/>
<rect x="531" y="147" width="5" height="33" fill="#00ff00"/>
<rect x="532" y="148" width="3" height="31" fill="#ffffff"/>
<rect x="541" y="175" width="1" height="48" fill="#00ff00"/>
<rect x="539" y="179" width="5" height="40" fill="#00ff00"/>
<rect x="540" y="180" width="3" height="38" fill="#ffffff"/>
<rect x="549" y="187" width="1" height="44" fill="#00ff00"/>
<rect x="547" y="191" width="5" height="27" fill="#00ff00"/>
<rect x="548" y="192" width="3" height="25" fill="#000000"/>
<rect x="557" y="184" width="1" height="20" fill="#00ff00"/>
<rect x="555" y="191" width="5" height="11" fill="#00ff00"/>
<rect x="556" y="192" width="3" height="9" fill="#ffffff"/>
<rect x="565" y="200" width="1" height="25" fill="#00ff00"/>
<rect x="563" y="201" width="5" height="20" fill="#00ff00"/>
<rect x="564" y="202" width="3" height="18" fill="#ffffff"/>
<rect x="573" y="217" width="1" height="15" fill="#00ff00"/>
<rect x="571" y="217" width="5" height="4" fill="#00ff00"/>
<rect x="572" y="218" width="3" height="2" fill="#000000"/>
<rect x="581" y="201" width="1" height="19" fill="#00ff00"/>
<rect x="579" y="201" width="5" height="17" fill="#00ff00"/>
<rect x="580" y="202" width="3" height="15" fill="#000000"/>
<rect x="589" y="197" width="1" height="7" fill="#00ff00"/>
<rect x="587" y="201" width="5" height="1" fill="#00ff00"/>
<rect x="597" y="201" width="1" height="6" fill="#00ff00"/>
<rect x="595" y="202" width="5" height="5" fill="#00ff00"/>
<rect x="596" y="203" width="3" height="3" fill="#ffffff"/>
<rect x="605" y="202" width="1" height="9" fill="#00ff00"/>
<rect x="603" y="203" width="5" height="7" fill="#00ff00"/>
<rect x="604" y="204" width="3" height="5" fill="#000000"/>
<rect x="613" y="194" width="1" height="12" fill="#00ff00"/>
<rect x="611" y="197" width="5" height="7" fill="#00ff00"/>
<rect x="612" y="198" width="3" height="5" fill="#000000"/>
<rect x="621" y="184" width="1" height="21" fill="#00ff00"/>
<rect x="619" y="191" width="5" height="7" fill="#00ff00"/>
<rect x="620" y="192" width="3" height="5" fill="#000000"/>
<rect x="629" y="191" width="1" height="37" fill="#00ff00"/>
<rect x="627" y="191" width="5" height="33" fill="#00ff00"/>
<rect x="628" y="192" width="3" height="31" fill="#ffffff"/>
<rect x="637" y="221" width="1" height="28" fill="#00ff00"/>
<rect x="635" y="223" width="5" height="11" fill="#00ff00"/>
<rect x="636" y="224" width="3" height="9" fill="#ffffff"/>
<rect x="645" y="232" width="1" height="27" fill="#00ff00"/>
<rect x="643" y="233" width="5" height="19" fill="#00ff00"/>
<rect x="644" y="234" width="3" height="17" fill="#ffffff"/>
<rect x="653" y="249" width="1" height="34" fill="#00ff00"/>
<rect x="651" y="251" width="5" height="14" fill="#00ff00"/>
<rect x="652" y="252" width="3" height="12" fill="#ffffff"/>
<rect x="661" y="253" width="1" height="19" fill="#00ff00"/>
<rect x="659" y="254" width="5" height="11" fill="#00ff00"/>
<rect x="660" y="255" width="3" height="9" fill="#000000"/>
<rect x="669" y="238" width="1" height="21" fill="#00ff00"/>
<rect x="667" y="238" width="5" height="17" fill="#00ff00"/>
<rect x="668" y="239" width="3" height="15" fill="#000000"/>
<rect x="677" y="236" width="1" height="22" fill="#00ff00"/>
<rect x="675" y="238" width="5" height="3" fill="#00ff00"/>
<rect x="676" y="239" width="3" height="1" fill="#ffffff"/>
</g>
<path d="M261 182L270.5 191.5V195.5L262.7 187.7V204.3H259.3V187.7L251.5 195.5V191.5Z" fill="#87cefa"/>
<path d="M645.7 228.6L655.3 219V215L647.4 222.9V206.7H644V222.9L636.1 215V219Z" fill="#ff0000"/>
<polygon points="252.40,213.20 250.58,217.34 246.08,216.85 248.75,220.50 246.08,224.15 250.58,223.66 252.40,227.80 254.22,223.66 258.72,224.15 256.05,220.50 258.72,216.85 254.22,217.34" fill="#87cefa"/>
<polygon points="636.80,201.20 634.97,205.34 630.48,204.85 633.15,208.50 630.48,212.15 634.97,211.66 636.80,215.80 638.62,211.66 643.12,212.15 640.45,208.50 643.12,204.85 638.62,205.34" fill="#ff0000"/>
<clipPath id="c1"><rect x="13" y="291" width="667" height="127"/></clipPath>
<g clip-path="url(#c1)" fill="none" stroke-width="2" stroke-linejoin="round" shape-rendering="crispEdges">
<polyline points="13.5,351.0 21.5,349.2 29.5,348.2 37.5,344.9 45.5,342.0 53.5,340.0 61.5,338.3 69.5,336.5 77.5,333.9 85.5,331.3 93.5,326.2 101.5,324.0 109.5,322.5 117.5,321.8 125.5,321.8 133.5,318.1 141.5,318.1 149.5,318.1 157.5,317.4 165.5,317.4 173.5,318.3 181.5,319.2 189.5,320.7 197.5,321.2 205.5,321.8 213.5,322.9 221.5,324.0 229.5,325.1 237.5,326.2 245.5,327.7 253.5,327.7 261.5,327.7 269.5,327.7 277.5,327.7 285.5,327.7 293.5,327.7 301.5,327.7 309.5,327.7 317.5,327.7 325.5,327.7 333.5,326.9 341.5,326.9 349.5,326.9 357.5,327.7 365.5,327.7 373.5,327.7 381.5,327.7 389.5,327.7 397.5,327.7 405.5,324.7 413.5,323.2 421.5,321.4 429.5,319.6 437.5,318.1 445.5,317.4 453.5,316.8 461.5,316.8 469.5,316.8 477.5,317.4 485.5,318.5 493.5,320.7 501.5,322.5 509.5,323.4 517.5,324.0 525.5,325.1 533.5,327.7 541.5,332.8 549.5,336.5 557.5,340.9 565.5,347.5 573.5,354.2 581.5,360.2 589.5,364.2 597.5,370.8 605.5,374.5 613.5,376.3 621.5,379.1 629.5,384.3 637.5,390.4 645.5,394.5 653.5,398.8 661.5,403.4 669.5,405.0 677.5,407.2" stroke="#ffff00"/>
<polyline points="13.5,310.8 21.5,308.0 29.5,306.5 37.5,305.4 45.5,304.9 53.5,305.8 61.5,307.1 69.5,309.7 77.5,313.0 85.5,317.4 93.5,324.0 101.5,328.4 109.5,332.8 117.5,342.7 125.5,353.6 133.5,363.5 141.5,370.1 149.5,378.9 157.5,383.3 165.5,385.5 173.5,388.0 181.5,389.8 189.5,389.8 197.5,385.5 205.5,380.0 213.5,375.6 221.5,372.3 229.5,365.7 237.5,356.9 245.5,351.4 253.5,338.8 261.5,332.8 269.5,322.9 277.5,318.1 285.5,317.4 293.5,315.9 301.5,313.7 309.5,311.9 317.5,311.3 325.5,311.3 333.5,312.2 341.5,313.0 349.5,313.7 357.5,316.3 365.5,320.3 373.5,324.0 381.5,326.9 389.5,330.2 397.5,332.8 405.5,335.0 413.5,336.4 421.5,339.4 429.5,342.7 437.5,346.6 445.5,352.5 453.5,362.4 461.5,371.2 469.5,378.9 477.5,383.3 485.5,387.7 493.5,390.7 501.5,390.5 509.5,386.6 517.5,383.3 525.5,373.0 533.5,373.0 541.5,371.6 549.5,374.5 557.5,377.8 565.5,384.4 573.5,393.1 581.5,399.7 589.5,404.5 597.5,406.3 605.5,407.4 613.5,406.4 621.5,404.2 629.5,404.0 637.5,405.1 645.5,405.1 653.5,406.2 661.5,407.6 669.5,409.8 677.5,410.0" stroke="#00ffff"/>
<polyline points="13.5,306.5 21.5,307.0 29.5,309.7 37.5,309.7 45.5,309.7 53.5,342.7 61.5,361.3 69.5,386.6 77.5,400.8 85.5,406.3 93.5,406.3 101.5,399.7 109.5,399.7 117.5,399.7 125.5,398.6 133.5,397.0 141.5,396.4 149.5,378.9 157.5,352.5 165.5,330.6 173.5,313.0 181.5,311.5 189.5,312.6 197.5,322.9 205.5,329.0 213.5,349.2 221.5,384.4 229.5,374.5 237.5,351.9 245.5,378.9 253.5,360.0 261.5,339.4 269.5,329.5 277.5,319.6 285.5,315.9 293.5,311.9 301.5,310.8 309.5,310.4 317.5,310.4 325.5,309.7 333.5,316.8 341.5,336.1 349.5,364.6 357.5,394.2 365.5,409.6 373.5,415.1 381.5,412.9 389.5,404.1 397.5,377.8 405.5,342.7 413.5,324.5 421.5,310.8 429.5,313.7 437.5,315.2 445.5,333.9 453.5,364.6 461.5,393.1 469.5,403.0 477.5,403.7 485.5,398.6 493.5,388.0 501.5,380.0 509.5,353.6 517.5,333.9 525.5,326.2 533.5,355.8 541.5,384.4 549.5,395.3 557.5,400.8 565.5,406.3 573.5,406.3 581.5,397.5 589.5,388.7 597.5,375.6 605.5,359.1 613.5,362.4 621.5,329.5 629.5,347.5 637.5,375.5 645.5,392.0 653.5,400.2 661.5,404.7 669.5,406.7 677.5,401.8" stroke="#ff0000"/>
</g>
<clipPath id="c2"><rect x="13" y="421" width="667" height="131"/></clipPath>
<g clip-path="url(#c2)">
<g shape-rendering="crispEdges">
<rect x="12" y="460" width="3" height="36" fill="#c8c8c8"/>
<rect x="20" y="459" width="3" height="37" fill="#c8c8c8"/>
<rect x="28" y="459" width="3" height="37" fill="#c8c8c8"/>
<rect x="36" y="458" width="3" height="38" fill="#c8c8c8"/>
<rect x="44" y="457" width="3" height="39" fill="#c8c8c8"/>
<rect x="52" y="462" width="3" height="34" fill="#c8c8c8"/>
<rect x="60" y="464" width="3" height="32" fill="#c8c8c8"/>
<rect x="68" y="468" width="3" height="28" fill="#c8c8c8"/>
<rect x="76" y="474" width="3" height="22" fill="#c8c8c8"/>
<rect x="84" y="479" width="3" height="17" fill="#c8c8c8"/>
<rect x="92" y="481" width="3" height="15" fill="#c8c8c8"/>
<rect x="100" y="482" width="3" height="14" fill="#c8c8c8"/>
<rect x="108" y="486" width="3" height="10" fill="#c8c8c8"/>
<rect x="116" y="494" width="3" height="2" fill="#c8c8c8"/>
<rect x="124" y="496" width="3" height="4" fill="#c8c8c8"/>
<rect x="132" y="496" width="3" height="5" fill="#c8c8c8"/>
<rect x="140" y="496" width="3" height="5" fill="#c8c8c8"/>
<rect x="148" y="496" width="3" height="4" fill="#c8c8c8"/>
<rect x="156" y="494" width="3" height="2" fill="#c8c8c8"/>
<rect x="164" y="491" width="3" height="5" fill="#c8c8c8"/>
<rect x="172" y="490" width="3" height="6" fill="#c8c8c8"/>
<rect x="180" y="489" width="3" height="7" fill="#c8c8c8"/>
<rect x="188" y="487" width="3" height="9" fill="#c8c8c8"/>
<rect x="196" y="487" width="3" height="9" fill="#c8c8c8"/>
<rect x="204" y="484" width="3" height="12" fill="#c8c8c8"/>
<rect x="212" y="486" width="3" height="10" fill="#c8c8c8"/>
<rect x="220" y="487" width="3" height="9" fill="#c8c8c8"/>
<rect x="228" y="488" width="3" height="8" fill="#c8c8c8"/>
<rect x="236" y="486" width="3" height="10" fill="#c8c8c8"/>
<rect x="244" y="486" width="3" height="10" fill="#c8c8c8"/>
<rect x="252" y="481" width="3" height="15" fill="#c8c8c8"/>
<rect x="260" y="477" width="3" height="19" fill="#c8c8c8"/>
<rect x="268" y="472" width="3" height="24" fill="#c8c8c8"/>
<rect x="276" y="470" width="3" height="26" fill="#c8c8c8"/>
<rect x="284" y="467" width="3" height="29" fill="#c8c8c8"/>
<rect x="292" y="463" width="3" height="33" fill="#c8c8c8"/>
<rect x="300" y="454" width="3" height="42" fill="#c8c8c8"/>
<rect x="308" y="437" width="3" height="59" fill="#c8c8c8"/>
<rect x="316" y="433" width="3" height="63" fill="#c8c8c8"/>
<rect x="324" y="427" width="3" height="69" fill="#c8c8c8"/>
<rect x="332" y="431" width="3" height="65" fill="#c8c8c8"/>
<rect x="340" y="440" width="3" height="56" fill="#c8c8c8"/>
<rect x="348" y="448" width="3" height="48" fill="#c8c8c8"/>
<rect x="356" y="458" width="3" height="38" fill="#c8c8c8"/>
<rect x="364" y="468" width="3" height="28" fill="#c8c8c8"/>
<rect x="372" y="475" width="3" height="21" fill="#c8c8c8"/>
<rect x="380" y="480" width="3" height="16" fill="#c8c8c8"/>
<rect x="388" y="482" width="3" height="14" fill="#c8c8c8"/>
<rect x="396" y="482" width="3" height="14" fill="#c8c8c8"/>
<rect x="404" y="481" width="3" height="15" fill="#c8c8c8"/>
<rect x="412" y="480" width="3" height="16" fill="#c8c8c8"/>
<rect x="420" y="478" width="3" height="18" fill="#c8c8c8"/>
<rect x="428" y="479" width="3" height="17" fill="#c8c8c8"/>
<rect x="436" y="480" width="3" height="16" fill="#c8c8c8"/>
<rect x="444" y="481" width="3" height="15" fill="#c8c8c8"/>
<rect x="452" y="486" width="3" height="10" fill="#c8c8c8"/>
<rect x="460" y="493" width="3" height="3" fill="#c8c8c8"/>
<rect x="468" y="496" width="3" height="2" fill="#c8c8c8"/>
<rect x="476" y="496" width="3" height="2" fill="#c8c8c8"/>
<rect x="492" y="496" width="3" height="2" fill="#c8c8c8"/>
<rect x="500" y="496" width="3" height="4" fill="#c8c8c8"/>
<rect x="508" y="496" width="3" height="3" fill="#c8c8c8"/>
<rect x="516" y="496" width="3" height="4" fill="#c8c8c8"/>
<rect x="524" y="495" width="3" height="1" fill="#c8c8c8"/>
<rect x="540" y="496" width="3" height="12" fill="#c8c8c8"/>
<rect x="548" y="496" width="3" height="16" fill="#c8c8c8"/>
<rect x="556" y="496" width="3" height="20" fill="#c8c8c8"/>
<rect x="564" y="496" width="3" height="27" fill="#c8c8c8"/>
<rect x="572" y="496" width="3" height="31" fill="#c8c8c8"/>
<rect x="580" y="496" width="3" height="31" fill="#c8c8c8"/>
<rect x="588" y="496" width="3" height="31" fill="#c8c8c8"/>
<rect x="596" y="496" width="3" height="31" fill="#c8c8c8"/>
<rect x="604" y="496" width="3" height="29" fill="#c8c8c8"/>
<rect x="612" y="496" width="3" height="27" fill="#c8c8c8"/>
<rect x="620" y="496" width="3" height="25" fill="#c8c8c8"/>
<rect x="628" y="496" width="3" height="29" fill="#c8c8c8"/>
<rect x="636" y="496" width="3" height="33" fill="#c8c8c8"/>
<rect x="644" y="496" width="3" height="40" fill="#c8c8c8"/>
<rect x="652" y="496" width="3" height="46" fill="#c8c8c8"/>
<rect x="660" y="496" width="3" height="51" fill="#c8c8c8"/>
<rect x="668" y="496" width="3" height="50" fill="#c8c8c8"/>
<rect x="676" y="496" width="3" height="48" fill="#c8c8c8"/>
</g>
<g fill="none" stroke-width="2" stroke-linejoin="round" shape-rendering="crispEdges">
<polyline points="13.5,470.3 21.5,468.0 29.5,466.4 37.5,464.1 45.5,463.0 53.5,461.4 61.5,460.8 69.5,460.8 77.5,461.9 85.5,463.7 93.5,466.8 101.5,468.7 109.5,472.5 117.5,476.6 125.5,481.1 133.5,484.5 141.5,488.4 149.5,490.6 157.5,492.9 165.5,494.3 173.5,494.5 181.5,494.7 189.5,493.6 197.5,492.9 205.5,490.6 213.5,489.7 221.5,488.4 229.5,487.9 237.5,486.8 245.5,486.3 253.5,486.2 261.5,485.7 269.5,483.8 277.5,482.9 285.5,480.7 293.5,476.6 301.5,472.5 309.5,467.1 317.5,460.8 325.5,455.1 333.5,449.4 341.5,446.0 349.5,443.8 357.5,443.3 365.5,443.8 373.5,446.7 381.5,451.7 389.5,457.4 397.5,463.0 405.5,468.7 413.5,472.4 421.5,475.5 429.5,477.7 437.5,479.3 445.5,480.0 453.5,481.1 461.5,482.3 469.5,483.8 477.5,485.7 485.5,487.5 493.5,488.8 501.5,490.2 509.5,492.4 517.5,494.3 525.5,496.5 533.5,497.0 541.5,498.8 549.5,499.7 557.5,501.5 565.5,504.4 573.5,507.2 581.5,510.1 589.5,513.3 597.5,516.9 605.5,521.4 613.5,522.3 621.5,523.0 629.5,524.1 637.5,525.3 645.5,526.2 653.5,527.5 661.5,530.0 669.5,532.1 677.5,534.2" stroke="#ff0000"/>
</g>
</g>
<path d="M13 547L13 552L18 552Z" fill="#778899"/>
<path d="M16 41H23L19.5 45Z" fill="#fff"/>
<text x="28.3" y="45.5" font-size="9.4" fill="#fff" stroke="#fff" textLength="48.6" lengthAdjust="spacingAndGlyphs" stroke-width="0.18">GBPJPY,H1</text>
<text x="85" y="45.5" font-size="9.4" fill="#fff" stroke="#fff" textLength="32" lengthAdjust="spacingAndGlyphs" stroke-width="0.18">162.513</text>
<text x="121" y="45.5" font-size="9.4" fill="#fff" stroke="#fff" textLength="32" lengthAdjust="spacingAndGlyphs" stroke-width="0.18">162.565</text>
<text x="157" y="45.5" font-size="9.4" fill="#fff" stroke="#fff" textLength="32" lengthAdjust="spacingAndGlyphs" stroke-width="0.18">162.500</text>
<text x="193" y="45.5" font-size="9.4" fill="#fff" stroke="#fff" textLength="32" lengthAdjust="spacingAndGlyphs" stroke-width="0.18">162.514</text>
<text x="686.5" y="58" font-size="9.4" fill="#fff" stroke="#fff" textLength="32.5" lengthAdjust="spacingAndGlyphs" stroke-width="0.18">164.460</text>
<text x="686.5" y="91" font-size="9.4" fill="#fff" stroke="#fff" textLength="32.5" lengthAdjust="spacingAndGlyphs" stroke-width="0.18">163.680</text>
<text x="686.5" y="124" font-size="9.4" fill="#fff" stroke="#fff" textLength="32.5" lengthAdjust="spacingAndGlyphs" stroke-width="0.18">162.880</text>
<text x="686.5" y="157" font-size="9.4" fill="#fff" stroke="#fff" textLength="32.5" lengthAdjust="spacingAndGlyphs" stroke-width="0.18">162.100</text>
<text x="686.5" y="190" font-size="9.4" fill="#fff" stroke="#fff" textLength="32.5" lengthAdjust="spacingAndGlyphs" stroke-width="0.18">161.300</text>
<text x="686.5" y="223" font-size="9.4" fill="#fff" stroke="#fff" textLength="32.5" lengthAdjust="spacingAndGlyphs" stroke-width="0.18">160.520</text>
<text x="686.5" y="256" font-size="9.4" fill="#fff" stroke="#fff" textLength="32.5" lengthAdjust="spacingAndGlyphs" stroke-width="0.18">159.720</text>
<text x="686.5" y="289" font-size="9.4" fill="#fff" stroke="#fff" textLength="32.5" lengthAdjust="spacingAndGlyphs" stroke-width="0.18">158.940</text>
<rect x="682" y="131" width="41" height="11" fill="#ffffff"/>
<text x="686.5" y="140" font-size="9.4" fill="#000" stroke="#000" textLength="32.5" lengthAdjust="spacingAndGlyphs" stroke-width="0.18">162.514</text>
<text x="17.7" y="302.8" font-size="9.4" fill="#fff" stroke="#fff" textLength="108" lengthAdjust="spacingAndGlyphs" stroke-width="0.18">R(9,26,52) 10.0 -89.9 10.3</text>
<text x="684.3" y="300.6" font-size="9.4" fill="#fff" stroke="#fff" textLength="14.4" lengthAdjust="spacingAndGlyphs" stroke-width="0.18">120</text>
<text x="683.8" y="307.1" font-size="9.4" fill="#fff" stroke="#fff" textLength="14" lengthAdjust="spacingAndGlyphs" stroke-width="0.18">100</text>
<text x="683.2" y="318" font-size="9.4" fill="#fff" stroke="#fff" textLength="10" lengthAdjust="spacingAndGlyphs" stroke-width="0.18">80</text>
<text x="683.2" y="336" font-size="9.4" fill="#fff" stroke="#fff" textLength="10" lengthAdjust="spacingAndGlyphs" stroke-width="0.18">50</text>
<text x="684" y="364" font-size="9.4" fill="#fff" stroke="#fff" textLength="18" lengthAdjust="spacingAndGlyphs" stroke-width="0.18">0.00</text>
<text x="683" y="393" font-size="9.4" fill="#fff" stroke="#fff" textLength="13" lengthAdjust="spacingAndGlyphs" stroke-width="0.18">-50</text>
<text x="683" y="409" font-size="9.4" fill="#fff" stroke="#fff" textLength="13" lengthAdjust="spacingAndGlyphs" stroke-width="0.18">-80</text>
<text x="684" y="415.2" font-size="9.4" fill="#fff" stroke="#fff" textLength="18" lengthAdjust="spacingAndGlyphs" stroke-width="0.18">-100</text>
<text x="17.7" y="432.7" font-size="9.4" fill="#fff" stroke="#fff" textLength="133.5" lengthAdjust="spacingAndGlyphs" stroke-width="0.18">MACD(12,26,9) -0.1107 -0.1036</text>
<text x="684" y="431.5" font-size="9.4" fill="#fff" stroke="#fff" textLength="22.7" lengthAdjust="spacingAndGlyphs" stroke-width="0.18">0.711</text>
<text x="684" y="500.2" font-size="9.4" fill="#fff" stroke="#fff" textLength="18.3" lengthAdjust="spacingAndGlyphs" stroke-width="0.18">0.00</text>
<text x="684" y="549.2" font-size="9.4" fill="#fff" stroke="#fff" textLength="31" lengthAdjust="spacingAndGlyphs" stroke-width="0.18">-0.5294</text>
<text x="12.5" y="565" font-size="9.4" fill="#fff" stroke="#fff" textLength="51.8" lengthAdjust="spacingAndGlyphs" stroke-width="0.18">24 Mar 2022</text>
<text x="76.5" y="565" font-size="9.4" fill="#fff" stroke="#fff" textLength="54" lengthAdjust="spacingAndGlyphs" stroke-width="0.18">25 Mar 05:00</text>
<text x="140.5" y="565" font-size="9.4" fill="#fff" stroke="#fff" textLength="54" lengthAdjust="spacingAndGlyphs" stroke-width="0.18">25 Mar 13:00</text>
<text x="204.5" y="565" font-size="9.4" fill="#fff" stroke="#fff" textLength="54" lengthAdjust="spacingAndGlyphs" stroke-width="0.18">25 Mar 21:00</text>
<text x="268.5" y="565" font-size="9.4" fill="#fff" stroke="#fff" textLength="54" lengthAdjust="spacingAndGlyphs" stroke-width="0.18">28 Mar 06:00</text>
<text x="332.5" y="565" font-size="9.4" fill="#fff" stroke="#fff" textLength="54" lengthAdjust="spacingAndGlyphs" stroke-width="0.18">28 Mar 14:00</text>
<text x="396.5" y="565" font-size="9.4" fill="#fff" stroke="#fff" textLength="54" lengthAdjust="spacingAndGlyphs" stroke-width="0.18">28 Mar 22:00</text>
<text x="460.5" y="565" font-size="9.4" fill="#fff" stroke="#fff" textLength="54" lengthAdjust="spacingAndGlyphs" stroke-width="0.18">29 Mar 06:00</text>
<text x="524.5" y="565" font-size="9.4" fill="#fff" stroke="#fff" textLength="54" lengthAdjust="spacingAndGlyphs" stroke-width="0.18">29 Mar 14:00</text>
<text x="588.5" y="565" font-size="9.4" fill="#fff" stroke="#fff" textLength="54" lengthAdjust="spacingAndGlyphs" stroke-width="0.18">29 Mar 22:00</text>
<text x="652.5" y="565" font-size="9.4" fill="#fff" stroke="#fff" textLength="54" lengthAdjust="spacingAndGlyphs" stroke-width="0.18">30 Mar 06:00</text>
</svg></body></html>
